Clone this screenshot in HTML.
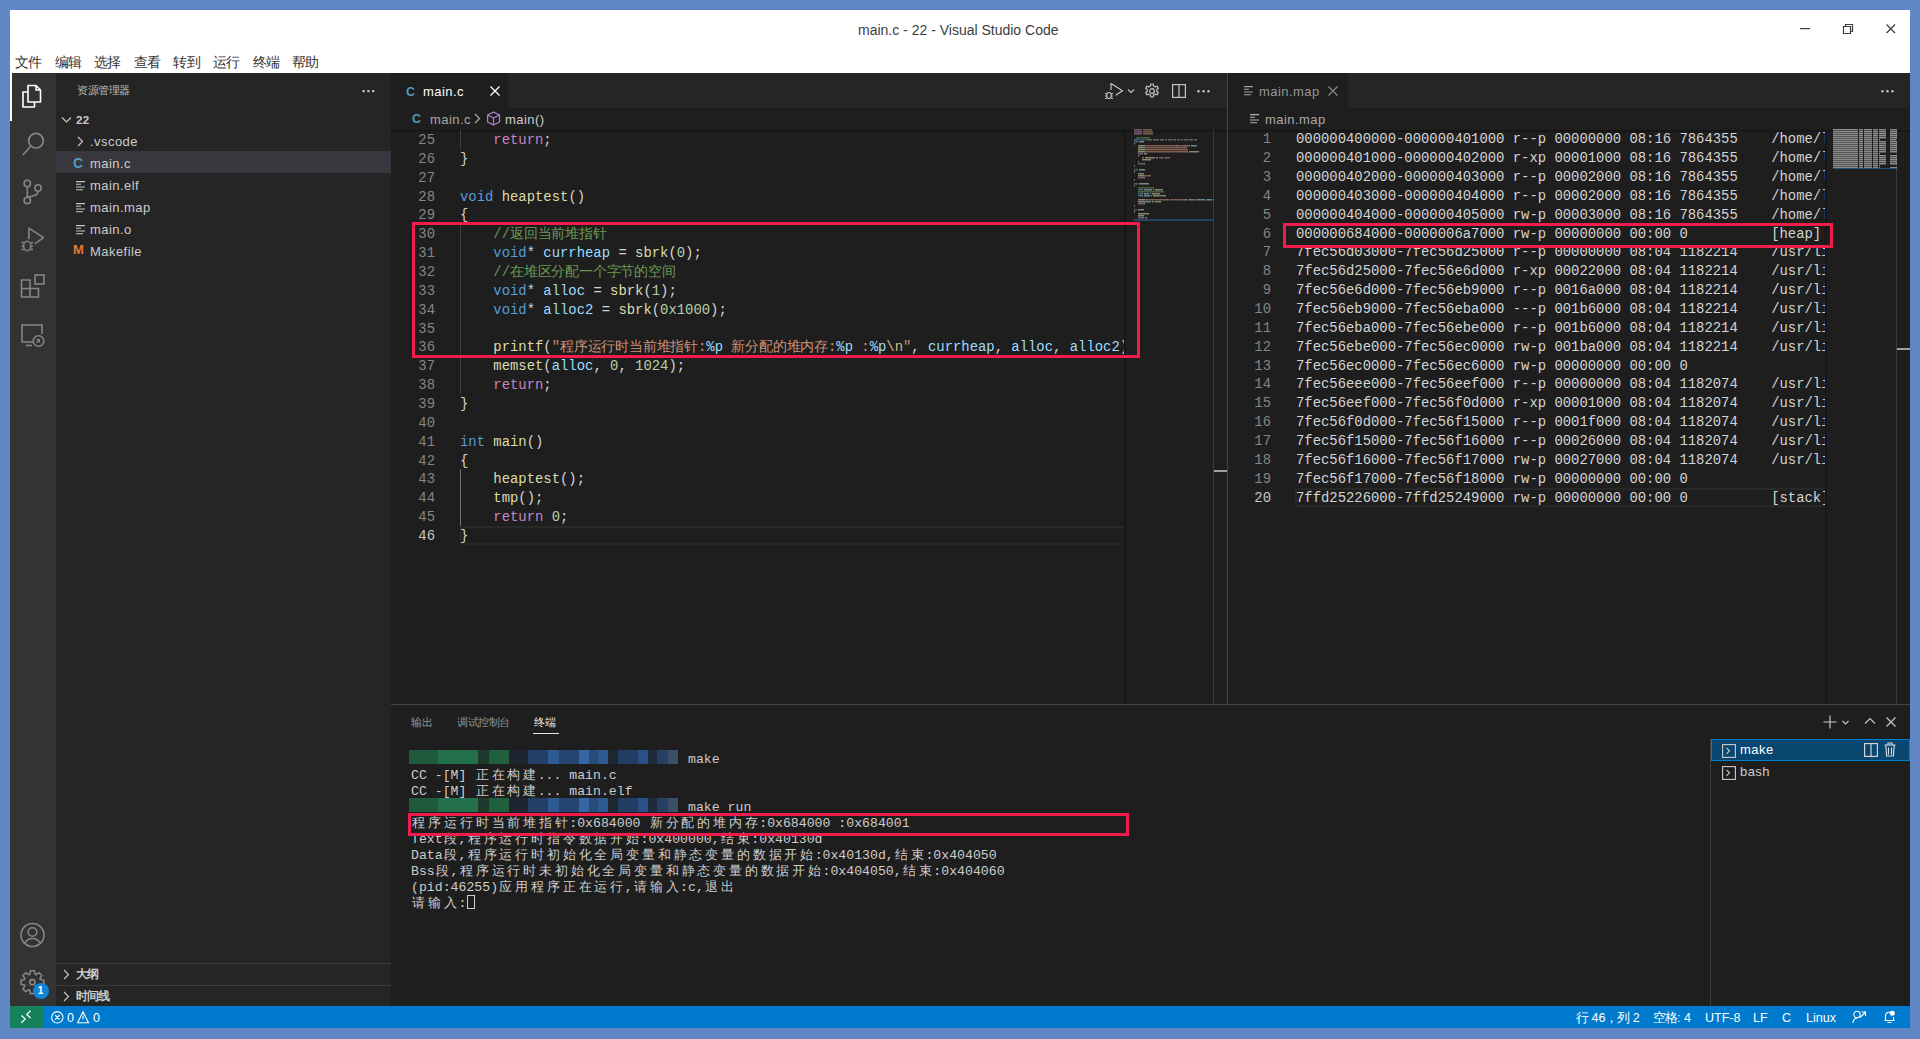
<!DOCTYPE html><html><head><meta charset="utf-8"><style>
*{margin:0;padding:0;box-sizing:border-box}
html,body{width:1920px;height:1039px;overflow:hidden;background:#6087c4;font-family:"Liberation Sans",sans-serif}
.a{position:absolute}
i.cj{display:inline-block;font-style:normal;text-align:center;overflow:visible;vertical-align:top}
.code{position:absolute;font-family:"Liberation Mono",monospace;font-size:13.9px;white-space:pre;line-height:18.857px;height:18.857px;color:#d4d4d4}
.ln{position:absolute;font-family:"Liberation Mono",monospace;font-size:13.9px;color:#858585;text-align:right;line-height:18.857px;height:18.857px;width:60px}
.k{color:#569cd6}.c{color:#c586c0}.f{color:#dcdcaa}.v{color:#9cdcfe}.s{color:#ce9178}.cm{color:#6a9955}.n{color:#b5cea8}.e{color:#d7ba7d}.p{color:#d4d4d4}
.term{position:absolute;font-family:"Liberation Mono",monospace;font-size:13.2px;white-space:pre;color:#cccccc;line-height:16px;height:16px;padding-top:2px}
.red{position:absolute;border:3px solid #f01c4c}
.side{position:absolute;font-size:13px;letter-spacing:0.45px;color:#cccccc;line-height:22px;height:22px;white-space:pre;padding-top:2px}
svg{position:absolute;overflow:visible}
.clip{position:absolute;overflow:hidden}
</style></head><body>
<div class="a" style="left:10px;top:10px;width:1900px;height:63px;background:#ffffff"></div>
<div class="a" style="left:858px;top:20px;height:20px;font-size:14px;color:#3c3c3c;white-space:pre;line-height:20px">main.c - 22 - Visual Studio Code</div>
<svg style="left:1800px;top:28px" width="11" height="2"><rect x="0" y="0" width="10" height="1.2" fill="#3c3c3c"/></svg>
<svg style="left:1842px;top:23px" width="12" height="12"><path d="M1.5 3.5h7v7h-7z M3.5 3.5v-2h7v7h-2" fill="none" stroke="#3c3c3c" stroke-width="1.2"/></svg>
<svg style="left:1886px;top:24px" width="10" height="10"><path d="M0.5 0.5L9 9M9 0.5L0.5 9" stroke="#3c3c3c" stroke-width="1.2"/></svg>
<div class="a" style="left:15.0px;top:54.5px;font-size:13.5px;color:#333;line-height:16px;white-space:pre"><i class="cj" style="width:13.2px">文</i><i class="cj" style="width:13.2px">件</i></div>
<div class="a" style="left:54.6px;top:54.5px;font-size:13.5px;color:#333;line-height:16px;white-space:pre"><i class="cj" style="width:13.2px">编</i><i class="cj" style="width:13.2px">辑</i></div>
<div class="a" style="left:94.2px;top:54.5px;font-size:13.5px;color:#333;line-height:16px;white-space:pre"><i class="cj" style="width:13.2px">选</i><i class="cj" style="width:13.2px">择</i></div>
<div class="a" style="left:133.8px;top:54.5px;font-size:13.5px;color:#333;line-height:16px;white-space:pre"><i class="cj" style="width:13.2px">查</i><i class="cj" style="width:13.2px">看</i></div>
<div class="a" style="left:173.4px;top:54.5px;font-size:13.5px;color:#333;line-height:16px;white-space:pre"><i class="cj" style="width:13.2px">转</i><i class="cj" style="width:13.2px">到</i></div>
<div class="a" style="left:213.0px;top:54.5px;font-size:13.5px;color:#333;line-height:16px;white-space:pre"><i class="cj" style="width:13.2px">运</i><i class="cj" style="width:13.2px">行</i></div>
<div class="a" style="left:252.6px;top:54.5px;font-size:13.5px;color:#333;line-height:16px;white-space:pre"><i class="cj" style="width:13.2px">终</i><i class="cj" style="width:13.2px">端</i></div>
<div class="a" style="left:292.2px;top:54.5px;font-size:13.5px;color:#333;line-height:16px;white-space:pre"><i class="cj" style="width:13.2px">帮</i><i class="cj" style="width:13.2px">助</i></div>
<div class="a" style="left:10px;top:73px;width:46px;height:933px;background:#333333"></div>
<div class="a" style="left:10px;top:73px;width:2px;height:48px;background:#ffffff"></div>
<svg style="left:20px;top:83px" width="26" height="26"><g fill="none" stroke="#ffffff" stroke-width="1.6" stroke-linejoin="round"><path d="M8 2.5h8l4.5 4.5v12h-12.5z"/><path d="M16 2.5v4.5h4.5"/><path d="M8 9H3v15h11.5v-5"/></g></svg>
<svg style="left:19px;top:129px" width="26" height="30"><g fill="none" stroke="#858585" stroke-width="1.7"><circle cx="17" cy="11.7" r="7.3"/><path d="M12 17L3.8 26"/></g></svg>
<svg style="left:19px;top:176px" width="26" height="30"><g fill="none" stroke="#858585" stroke-width="1.6"><circle cx="8.3" cy="7.5" r="3.2"/><circle cx="8.3" cy="24.4" r="3.2"/><circle cx="19" cy="12" r="3.2"/><path d="M8.3 10.7v10.5M19 15.2c0 4-4 5-10.7 6"/></g></svg>
<svg style="left:14px;top:222px" width="36" height="36"><g fill="none" stroke="#858585" stroke-width="1.6" stroke-linejoin="round"><path d="M14.9 17.3V6.2l14.6 9.4-8.7 6.2"/><ellipse cx="13.2" cy="24" rx="3.6" ry="4.8"/><path d="M7.4 20.5h2.3M7.4 24h2.3M7.4 27.5h2.3M16.7 20.5h2.3M16.7 24h2.3M16.7 27.5h2.3"/></g></svg>
<svg style="left:20px;top:273px" width="28" height="28"><g fill="none" stroke="#858585" stroke-width="1.6"><path d="M1.5 7h8.5v8.5h8.5v8.5H1.5z M1.5 15.5h8.5v8.5"/><rect x="15" y="2" width="9" height="9"/></g></svg>
<svg style="left:20px;top:323px" width="28" height="28"><g fill="none" stroke="#858585" stroke-width="1.6"><path d="M14 19H2V2h20v9"/><path d="M6 22.5h6"/><circle cx="18.5" cy="18" r="5.3"/><path d="M16.5 19.5l3-3M19.5 19.5v-3h-3" stroke-width="1.2"/></g></svg>
<svg style="left:19px;top:921px" width="28" height="28"><g fill="none" stroke="#858585" stroke-width="1.6"><circle cx="13.5" cy="14" r="11.5"/><circle cx="13.5" cy="11" r="4.3"/><path d="M5.5 22.5c2-3.5 4.5-5 8-5s6 1.5 8 5"/></g></svg>
<svg style="left:10px;top:960px" width="46" height="46"><path d="M33.83 20.24 L33.83 24.16 L30.35 24.92 L29.94 25.89 L31.87 28.90 L29.10 31.67 L26.09 29.74 L25.12 30.15 L24.36 33.63 L20.44 33.63 L19.68 30.15 L18.71 29.74 L15.70 31.67 L12.93 28.90 L14.86 25.89 L14.45 24.92 L10.97 24.16 L10.97 20.24 L14.45 19.48 L14.86 18.51 L12.93 15.50 L15.70 12.73 L18.71 14.66 L19.68 14.25 L20.44 10.77 L24.36 10.77 L25.12 14.25 L26.09 14.66 L29.10 12.73 L31.87 15.50 L29.94 18.51 L30.35 19.48Z" fill="none" stroke="#858585" stroke-width="1.6" stroke-linejoin="round"/><circle cx="22.4" cy="22.2" r="2.6" fill="none" stroke="#858585" stroke-width="1.6"/></svg>
<div class="a" style="left:32.5px;top:982.5px;width:16px;height:16px;border-radius:50%;background:#1184d6;color:#fff;font-size:10px;font-weight:bold;text-align:center;line-height:16px">1</div>
<div class="a" style="left:56px;top:73px;width:335px;height:933px;background:#252526"></div>
<div class="a" style="left:77px;top:83px;font-size:11px;color:#bbbbbb;line-height:14px;white-space:pre"><i class="cj" style="width:10.6px">资</i><i class="cj" style="width:10.6px">源</i><i class="cj" style="width:10.6px">管</i><i class="cj" style="width:10.6px">理</i><i class="cj" style="width:10.6px">器</i></div>
<svg style="left:362px;top:90px" width="14" height="3"><rect x="0.5" y="0" width="2.2" height="2.2" fill="#c5c5c5"/><rect x="5.3" y="0" width="2.2" height="2.2" fill="#c5c5c5"/><rect x="10.1" y="0" width="2.2" height="2.2" fill="#c5c5c5"/></svg>
<svg style="left:61px;top:116px" width="12" height="8"><path d="M1 1.5l4.5 4.5 4.5-4.5" fill="none" stroke="#c5c5c5" stroke-width="1.2"/></svg>
<div class="side" style="left:76px;top:107px;font-weight:bold;font-size:11.5px">22</div>
<svg style="left:77px;top:136px" width="8" height="12"><path d="M1 1l4.5 4.5L1 10" fill="none" stroke="#c5c5c5" stroke-width="1.2"/></svg>
<div class="side" style="left:90px;top:129px">.vscode</div>
<div class="a" style="left:56px;top:151px;width:335px;height:22px;background:#37373d"></div>
<div class="a" style="left:73px;top:156px;font-size:14px;font-weight:bold;color:#519aba;line-height:14px">C</div>
<div class="side" style="left:90px;top:151px">main.c</div>
<svg style="left:75.5px;top:180.5px" width="10" height="10"><g stroke="#c5c5c5" stroke-width="1.1"><path d="M0 0.6h9M0 3.3h5M0 6h9M0 8.7h7"/></g></svg>
<div class="side" style="left:90px;top:173px">main.elf</div>
<svg style="left:75.5px;top:202.5px" width="10" height="10"><g stroke="#c5c5c5" stroke-width="1.1"><path d="M0 0.6h9M0 3.3h5M0 6h9M0 8.7h7"/></g></svg>
<div class="side" style="left:90px;top:195px">main.map</div>
<svg style="left:75.5px;top:224.5px" width="10" height="10"><g stroke="#c5c5c5" stroke-width="1.1"><path d="M0 0.6h9M0 3.3h5M0 6h9M0 8.7h7"/></g></svg>
<div class="side" style="left:90px;top:217px">main.o</div>
<div class="a" style="left:73px;top:243px;font-size:13px;font-weight:bold;color:#e37933;line-height:13px">M</div>
<div class="side" style="left:90px;top:239px">Makefile</div>
<div class="a" style="left:56px;top:963px;width:335px;height:1px;background:#3c3c3c"></div>
<div class="a" style="left:56px;top:985px;width:335px;height:1px;background:#3c3c3c"></div>
<svg style="left:63px;top:969px" width="8" height="12"><path d="M1 1l4.5 4.5L1 10" fill="none" stroke="#c5c5c5" stroke-width="1.2"/></svg>
<div class="a" style="left:76px;top:964px;font-size:11.5px;font-weight:bold;color:#cccccc;line-height:21px;white-space:pre"><i class="cj" style="width:11.2px">大</i><i class="cj" style="width:11.2px">纲</i></div>
<svg style="left:63px;top:991px" width="8" height="12"><path d="M1 1l4.5 4.5L1 10" fill="none" stroke="#c5c5c5" stroke-width="1.2"/></svg>
<div class="a" style="left:76px;top:986px;font-size:11.5px;font-weight:bold;color:#cccccc;line-height:21px;white-space:pre"><i class="cj" style="width:11.2px">时</i><i class="cj" style="width:11.2px">间</i><i class="cj" style="width:11.2px">线</i></div>
<div class="a" style="left:391px;top:73px;width:836px;height:631px;background:#1e1e1e"></div>
<div class="a" style="left:391px;top:73px;width:836px;height:35px;background:#252526"></div>
<div class="a" style="left:391px;top:73px;width:117px;height:35px;background:#1e1e1e"></div>
<div class="a" style="left:406px;top:85px;font-size:12.5px;font-weight:bold;color:#519aba;line-height:14px">C</div>
<div class="a" style="left:423px;top:83px;font-size:13px;letter-spacing:0.45px;color:#ffffff;line-height:18px;white-space:pre">main.c</div>
<svg style="left:490px;top:86px" width="10" height="10"><path d="M0.5 0.5L9.5 9.5M9.5 0.5L0.5 9.5" stroke="#ffffff" stroke-width="1.3"/></svg>
<svg style="left:1104px;top:81px" width="32" height="20"><g fill="none" stroke="#c5c5c5" stroke-width="1.2" stroke-linejoin="round"><path d="M7 9V2.5l11.5 7.2-6.8 4.6"/><ellipse cx="5" cy="14.5" rx="2.3" ry="3"/><path d="M1 12.5h1.7M1 15h1.7M1 17.5h1.7M7.3 12.5H9M7.3 15H9M7.3 17.5H9"/></g><path d="M24 8.5l3 3 3-3" fill="none" stroke="#c5c5c5" stroke-width="1.1"/></svg>
<svg style="left:1144px;top:83px" width="16" height="16"><g fill="none" stroke="#c5c5c5" stroke-width="1.2"><circle cx="8" cy="8" r="2.3"/><path d="M6.8 1h2.4l.4 2 1.6.9 1.9-.7 1.2 2.1-1.5 1.3v1.8l1.5 1.3-1.2 2.1-1.9-.7-1.6.9-.4 2H6.8l-.4-2-1.6-.9-1.9.7-1.2-2.1 1.5-1.3V6.6L1.7 5.3l1.2-2.1 1.9.7 1.6-.9z"/></g></svg>
<svg style="left:1172px;top:84px" width="14" height="14"><g fill="none" stroke="#c5c5c5" stroke-width="1.2"><rect x="0.6" y="0.6" width="12.8" height="12.8"/><path d="M7 0.6v12.8"/></g></svg>
<svg style="left:1197px;top:90px" width="14" height="3"><circle cx="1.5" cy="1.3" r="1.2" fill="#c5c5c5"/><circle cx="6.5" cy="1.3" r="1.2" fill="#c5c5c5"/><circle cx="11.5" cy="1.3" r="1.2" fill="#c5c5c5"/></svg>
<div class="a" style="left:412px;top:112px;font-size:12.5px;font-weight:bold;color:#519aba;line-height:14px">C</div>
<div class="a" style="left:430px;top:111px;font-size:13px;letter-spacing:0.45px;color:#a9a9a9;line-height:18px;white-space:pre">main.c</div>
<svg style="left:474px;top:113px" width="8" height="12"><path d="M1 1l4.5 4.5L1 10" fill="none" stroke="#a9a9a9" stroke-width="1.2"/></svg>
<svg style="left:487px;top:111px" width="14" height="15"><g fill="none" stroke="#b180d7" stroke-width="1.2" stroke-linejoin="round"><path d="M6.5 1L12.5 4v7L6.5 14 0.6 11V4z"/><path d="M0.6 4l5.9 3 6-3M6.5 7v7"/></g></svg>
<div class="a" style="left:505px;top:111px;font-size:13px;letter-spacing:0.45px;color:#cccccc;line-height:18px;white-space:pre">main()</div>
<div class="a" style="left:391px;top:130px;width:836px;height:3px;background:linear-gradient(#000000 0%,rgba(0,0,0,0) 100%);opacity:.35"></div>
<div class="a" style="left:460px;top:526.00px;width:666px;height:18.86px;border:2px solid #282828"></div>
<div class="a" style="left:460px;top:130.00px;width:1px;height:18.86px;background:#404040"></div>
<div class="a" style="left:460px;top:224.28px;width:1px;height:169.71px;background:#404040"></div>
<div class="a" style="left:460px;top:469.43px;width:1px;height:56.57px;background:#707070"></div>
<div class="ln" style="left:375px;top:131.00px;color:#858585">25</div>
<div class="ln" style="left:375px;top:149.86px;color:#858585">26</div>
<div class="ln" style="left:375px;top:168.71px;color:#858585">27</div>
<div class="ln" style="left:375px;top:187.57px;color:#858585">28</div>
<div class="ln" style="left:375px;top:206.43px;color:#858585">29</div>
<div class="ln" style="left:375px;top:225.28px;color:#858585">30</div>
<div class="ln" style="left:375px;top:244.14px;color:#858585">31</div>
<div class="ln" style="left:375px;top:263.00px;color:#858585">32</div>
<div class="ln" style="left:375px;top:281.86px;color:#858585">33</div>
<div class="ln" style="left:375px;top:300.71px;color:#858585">34</div>
<div class="ln" style="left:375px;top:319.57px;color:#858585">35</div>
<div class="ln" style="left:375px;top:338.43px;color:#858585">36</div>
<div class="ln" style="left:375px;top:357.28px;color:#858585">37</div>
<div class="ln" style="left:375px;top:376.14px;color:#858585">38</div>
<div class="ln" style="left:375px;top:395.00px;color:#858585">39</div>
<div class="ln" style="left:375px;top:413.86px;color:#858585">40</div>
<div class="ln" style="left:375px;top:432.71px;color:#858585">41</div>
<div class="ln" style="left:375px;top:451.57px;color:#858585">42</div>
<div class="ln" style="left:375px;top:470.43px;color:#858585">43</div>
<div class="ln" style="left:375px;top:489.28px;color:#858585">44</div>
<div class="ln" style="left:375px;top:508.14px;color:#858585">45</div>
<div class="ln" style="left:375px;top:527.00px;color:#c6c6c6">46</div>
<div class="clip" style="left:391px;top:130px;width:735px;height:574px">
<div class="code" style="left:69px;top:1.00px">    <span class="c">return</span><span class="p">;</span></div>
<div class="code" style="left:69px;top:19.86px"><span class="p">}</span></div>
<div class="code" style="left:69px;top:38.71px"></div>
<div class="code" style="left:69px;top:57.57px"><span class="k">void</span> <span class="f">heaptest</span><span class="p">()</span></div>
<div class="code" style="left:69px;top:76.43px"><span class="p">{</span></div>
<div class="code" style="left:69px;top:95.28px">    <span class="cm">//<i class="cj" style="width:13.8px">返</i><i class="cj" style="width:13.8px">回</i><i class="cj" style="width:13.8px">当</i><i class="cj" style="width:13.8px">前</i><i class="cj" style="width:13.8px">堆</i><i class="cj" style="width:13.8px">指</i><i class="cj" style="width:13.8px">针</i></span></div>
<div class="code" style="left:69px;top:114.14px">    <span class="k">void</span><span class="p">* </span><span class="v">currheap</span><span class="p"> = </span><span class="f">sbrk</span><span class="p">(</span><span class="n">0</span><span class="p">);</span></div>
<div class="code" style="left:69px;top:133.00px">    <span class="cm">//<i class="cj" style="width:13.8px">在</i><i class="cj" style="width:13.8px">堆</i><i class="cj" style="width:13.8px">区</i><i class="cj" style="width:13.8px">分</i><i class="cj" style="width:13.8px">配</i><i class="cj" style="width:13.8px">一</i><i class="cj" style="width:13.8px">个</i><i class="cj" style="width:13.8px">字</i><i class="cj" style="width:13.8px">节</i><i class="cj" style="width:13.8px">的</i><i class="cj" style="width:13.8px">空</i><i class="cj" style="width:13.8px">间</i></span></div>
<div class="code" style="left:69px;top:151.86px">    <span class="k">void</span><span class="p">* </span><span class="v">alloc</span><span class="p"> = </span><span class="f">sbrk</span><span class="p">(</span><span class="n">1</span><span class="p">);</span></div>
<div class="code" style="left:69px;top:170.71px">    <span class="k">void</span><span class="p">* </span><span class="v">alloc2</span><span class="p"> = </span><span class="f">sbrk</span><span class="p">(</span><span class="n">0x1000</span><span class="p">);</span></div>
<div class="code" style="left:69px;top:189.57px"></div>
<div class="code" style="left:69px;top:208.43px">    <span class="f">printf</span><span class="p">(</span><span class="s">&quot;<i class="cj" style="width:13.8px">程</i><i class="cj" style="width:13.8px">序</i><i class="cj" style="width:13.8px">运</i><i class="cj" style="width:13.8px">行</i><i class="cj" style="width:13.8px">时</i><i class="cj" style="width:13.8px">当</i><i class="cj" style="width:13.8px">前</i><i class="cj" style="width:13.8px">堆</i><i class="cj" style="width:13.8px">指</i><i class="cj" style="width:13.8px">针</i>:</span><span class="v">%p</span><span class="s"> <i class="cj" style="width:13.8px">新</i><i class="cj" style="width:13.8px">分</i><i class="cj" style="width:13.8px">配</i><i class="cj" style="width:13.8px">的</i><i class="cj" style="width:13.8px">堆</i><i class="cj" style="width:13.8px">内</i><i class="cj" style="width:13.8px">存</i>:</span><span class="v">%p</span><span class="s"> :</span><span class="v">%p</span><span class="e">\n</span><span class="s">&quot;</span><span class="p">, </span><span class="v">currheap</span><span class="p">, </span><span class="v">alloc</span><span class="p">, </span><span class="v">alloc2</span><span class="p">);</span></div>
<div class="code" style="left:69px;top:227.28px">    <span class="f">memset</span><span class="p">(</span><span class="v">alloc</span><span class="p">, </span><span class="n">0</span><span class="p">, </span><span class="n">1024</span><span class="p">);</span></div>
<div class="code" style="left:69px;top:246.14px">    <span class="c">return</span><span class="p">;</span></div>
<div class="code" style="left:69px;top:265.00px"><span class="p">}</span></div>
<div class="code" style="left:69px;top:283.86px"></div>
<div class="code" style="left:69px;top:302.71px"><span class="k">int</span> <span class="f">main</span><span class="p">()</span></div>
<div class="code" style="left:69px;top:321.57px"><span class="p">{</span></div>
<div class="code" style="left:69px;top:340.43px">    <span class="f">heaptest</span><span class="p">();</span></div>
<div class="code" style="left:69px;top:359.28px">    <span class="f">tmp</span><span class="p">();</span></div>
<div class="code" style="left:69px;top:378.14px">    <span class="c">return</span> <span class="n">0</span><span class="p">;</span></div>
<div class="code" style="left:69px;top:397.00px"><span class="p">}</span></div>
</div>
<div class="a" style="left:1124px;top:130px;width:2px;height:574px;background:#161616"></div>
<div class="a" style="left:1213px;top:130px;width:1px;height:574px;background:#3a3a3a"></div>
<div class="a" style="left:1214px;top:470px;width:13px;height:2px;background:#a0a0a0"></div>
<svg style="left:1134px;top:129px" width="80" height="92"><g opacity="0.55"><path fill="#c586c0" d="M0 0h1v1.6h-1zM1 0h1v1.6h-1zM2 0h1v1.6h-1zM3 0h1v1.6h-1zM4 0h1v1.6h-1zM5 0h1v1.6h-1zM6 0h1v1.6h-1zM7 0h1v1.6h-1zM0 2h1v1.6h-1zM1 2h1v1.6h-1zM2 2h1v1.6h-1zM3 2h1v1.6h-1zM4 2h1v1.6h-1zM5 2h1v1.6h-1zM6 2h1v1.6h-1zM7 2h1v1.6h-1zM0 4h1v1.6h-1zM1 4h1v1.6h-1zM2 4h1v1.6h-1zM3 4h1v1.6h-1zM4 4h1v1.6h-1zM5 4h1v1.6h-1zM6 4h1v1.6h-1zM7 4h1v1.6h-1zM4 24h1v1.6h-1zM5 24h1v1.6h-1zM6 24h1v1.6h-1zM7 24h1v1.6h-1zM8 24h1v1.6h-1zM8 28h1v1.6h-1zM9 28h1v1.6h-1zM30 28h1v1.6h-1zM31 28h1v1.6h-1zM32 28h1v1.6h-1zM33 28h1v1.6h-1zM34 28h1v1.6h-1zM35 28h1v1.6h-1zM4 34h1v1.6h-1zM5 34h1v1.6h-1zM6 34h1v1.6h-1zM7 34h1v1.6h-1zM8 34h1v1.6h-1zM9 34h1v1.6h-1zM4 48h1v1.6h-1zM5 48h1v1.6h-1zM6 48h1v1.6h-1zM7 48h1v1.6h-1zM8 48h1v1.6h-1zM9 48h1v1.6h-1zM4 74h1v1.6h-1zM5 74h1v1.6h-1zM6 74h1v1.6h-1zM7 74h1v1.6h-1zM8 74h1v1.6h-1zM9 74h1v1.6h-1zM4 88h1v1.6h-1zM5 88h1v1.6h-1zM6 88h1v1.6h-1zM7 88h1v1.6h-1zM8 88h1v1.6h-1zM9 88h1v1.6h-1z"/><path fill="#ce9178" d="M9 0h1v1.6h-1zM10 0h1v1.6h-1zM11 0h1v1.6h-1zM12 0h1v1.6h-1zM13 0h1v1.6h-1zM14 0h1v1.6h-1zM15 0h1v1.6h-1zM16 0h1v1.6h-1zM17 0h1v1.6h-1zM9 2h1v1.6h-1zM10 2h1v1.6h-1zM11 2h1v1.6h-1zM12 2h1v1.6h-1zM13 2h1v1.6h-1zM14 2h1v1.6h-1zM15 2h1v1.6h-1zM16 2h1v1.6h-1zM17 2h1v1.6h-1zM18 2h1v1.6h-1zM9 4h1v1.6h-1zM10 4h1v1.6h-1zM11 4h1v1.6h-1zM12 4h1v1.6h-1zM13 4h1v1.6h-1zM14 4h1v1.6h-1zM15 4h1v1.6h-1zM16 4h1v1.6h-1zM17 4h1v1.6h-1zM18 4h1v1.6h-1zM11 16h1v1.6h-1zM12 16h1v1.6h-1zM13 16h1v1.6h-1zM14 16h1v1.6h-1zM15 16h1v1.6h-1zM16 16h2v1.6h-2zM18 16h1v1.6h-1zM19 16h2v1.6h-2zM21 16h2v1.6h-2zM23 16h2v1.6h-2zM25 16h2v1.6h-2zM27 16h2v1.6h-2zM29 16h2v1.6h-2zM31 16h2v1.6h-2zM33 16h2v1.6h-2zM35 16h2v1.6h-2zM37 16h2v1.6h-2zM39 16h2v1.6h-2zM41 16h1v1.6h-1zM44 16h1v1.6h-1zM45 16h2v1.6h-2zM47 16h2v1.6h-2zM49 16h1v1.6h-1zM52 16h1v1.6h-1zM53 16h1v1.6h-1zM54 16h1v1.6h-1zM11 18h1v1.6h-1zM12 18h1v1.6h-1zM13 18h1v1.6h-1zM14 18h1v1.6h-1zM15 18h1v1.6h-1zM16 18h2v1.6h-2zM18 18h1v1.6h-1zM19 18h2v1.6h-2zM21 18h2v1.6h-2zM23 18h2v1.6h-2zM25 18h2v1.6h-2zM27 18h2v1.6h-2zM29 18h2v1.6h-2zM31 18h2v1.6h-2zM33 18h2v1.6h-2zM35 18h2v1.6h-2zM37 18h2v1.6h-2zM39 18h2v1.6h-2zM41 18h2v1.6h-2zM43 18h2v1.6h-2zM45 18h2v1.6h-2zM47 18h2v1.6h-2zM49 18h2v1.6h-2zM51 18h2v1.6h-2zM11 20h1v1.6h-1zM12 20h1v1.6h-1zM13 20h1v1.6h-1zM14 20h1v1.6h-1zM15 20h2v1.6h-2zM17 20h1v1.6h-1zM18 20h2v1.6h-2zM20 20h2v1.6h-2zM22 20h2v1.6h-2zM24 20h2v1.6h-2zM26 20h2v1.6h-2zM28 20h2v1.6h-2zM30 20h2v1.6h-2zM32 20h2v1.6h-2zM34 20h2v1.6h-2zM36 20h2v1.6h-2zM38 20h2v1.6h-2zM40 20h2v1.6h-2zM42 20h2v1.6h-2zM44 20h2v1.6h-2zM46 20h2v1.6h-2zM48 20h2v1.6h-2zM50 20h2v1.6h-2zM52 20h2v1.6h-2zM11 22h1v1.6h-1zM12 22h1v1.6h-1zM13 22h1v1.6h-1zM14 22h1v1.6h-1zM15 22h1v1.6h-1zM16 22h1v1.6h-1zM17 22h1v1.6h-1zM18 22h1v1.6h-1zM19 22h1v1.6h-1zM20 22h2v1.6h-2zM22 22h2v1.6h-2zM24 22h2v1.6h-2zM26 22h2v1.6h-2zM28 22h2v1.6h-2zM30 22h2v1.6h-2zM32 22h2v1.6h-2zM34 22h2v1.6h-2zM36 22h1v1.6h-1zM37 22h2v1.6h-2zM39 22h2v1.6h-2zM41 22h2v1.6h-2zM43 22h1v1.6h-1zM44 22h1v1.6h-1zM45 22h1v1.6h-1zM46 22h2v1.6h-2zM48 22h2v1.6h-2zM50 22h1v1.6h-1zM51 22h1v1.6h-1zM52 22h1v1.6h-1zM25 28h1v1.6h-1zM26 28h1v1.6h-1zM27 28h1v1.6h-1zM10 46h1v1.6h-1zM11 46h1v1.6h-1zM12 46h1v1.6h-1zM13 46h1v1.6h-1zM14 46h1v1.6h-1zM15 46h1v1.6h-1zM16 46h1v1.6h-1zM11 70h1v1.6h-1zM12 70h2v1.6h-2zM14 70h2v1.6h-2zM16 70h2v1.6h-2zM18 70h2v1.6h-2zM20 70h2v1.6h-2zM22 70h2v1.6h-2zM24 70h2v1.6h-2zM26 70h2v1.6h-2zM28 70h2v1.6h-2zM30 70h2v1.6h-2zM32 70h1v1.6h-1zM36 70h2v1.6h-2zM38 70h2v1.6h-2zM40 70h2v1.6h-2zM42 70h2v1.6h-2zM44 70h2v1.6h-2zM46 70h2v1.6h-2zM48 70h2v1.6h-2zM50 70h1v1.6h-1zM54 70h1v1.6h-1zM59 70h1v1.6h-1z"/><path fill="#6a9955" d="M2 8h1v1.6h-1zM3 8h1v1.6h-1zM4 8h2v1.6h-2zM6 8h2v1.6h-2zM8 8h2v1.6h-2zM10 8h2v1.6h-2zM12 8h2v1.6h-2zM14 8h2v1.6h-2zM4 58h1v1.6h-1zM5 58h1v1.6h-1zM6 58h2v1.6h-2zM8 58h2v1.6h-2zM10 58h2v1.6h-2zM12 58h2v1.6h-2zM14 58h2v1.6h-2zM16 58h2v1.6h-2zM18 58h2v1.6h-2zM4 62h1v1.6h-1zM5 62h1v1.6h-1zM6 62h2v1.6h-2zM8 62h2v1.6h-2zM10 62h2v1.6h-2zM12 62h2v1.6h-2zM14 62h2v1.6h-2zM16 62h2v1.6h-2zM18 62h2v1.6h-2zM20 62h2v1.6h-2zM22 62h2v1.6h-2zM24 62h2v1.6h-2zM26 62h2v1.6h-2zM28 62h2v1.6h-2z"/><path fill="#569cd6" d="M0 10h1v1.6h-1zM1 10h1v1.6h-1zM2 10h1v1.6h-1zM3 10h1v1.6h-1zM4 10h1v1.6h-1zM5 10h1v1.6h-1zM7 10h1v1.6h-1zM8 10h1v1.6h-1zM9 10h1v1.6h-1zM10 10h1v1.6h-1zM0 12h1v1.6h-1zM1 12h1v1.6h-1zM2 12h1v1.6h-1zM3 12h1v1.6h-1zM0 40h1v1.6h-1zM1 40h1v1.6h-1zM2 40h1v1.6h-1zM3 40h1v1.6h-1zM0 54h1v1.6h-1zM1 54h1v1.6h-1zM2 54h1v1.6h-1zM3 54h1v1.6h-1zM4 60h1v1.6h-1zM5 60h1v1.6h-1zM6 60h1v1.6h-1zM7 60h1v1.6h-1zM4 64h1v1.6h-1zM5 64h1v1.6h-1zM6 64h1v1.6h-1zM7 64h1v1.6h-1zM4 66h1v1.6h-1zM5 66h1v1.6h-1zM6 66h1v1.6h-1zM7 66h1v1.6h-1zM0 80h1v1.6h-1zM1 80h1v1.6h-1zM2 80h1v1.6h-1z"/><path fill="#a0a0a0" d="M12 10h1v1.6h-1zM13 10h1v1.6h-1zM14 10h1v1.6h-1zM15 10h1v1.6h-1zM16 10h1v1.6h-1zM17 10h1v1.6h-1zM19 10h1v1.6h-1zM20 10h1v1.6h-1zM21 10h1v1.6h-1zM22 10h1v1.6h-1zM23 10h1v1.6h-1zM24 10h1v1.6h-1zM26 10h1v1.6h-1zM27 10h1v1.6h-1zM28 10h1v1.6h-1zM29 10h1v1.6h-1zM31 10h1v1.6h-1zM32 10h1v1.6h-1zM34 10h1v1.6h-1zM35 10h1v1.6h-1zM36 10h1v1.6h-1zM37 10h1v1.6h-1zM39 10h1v1.6h-1zM40 10h1v1.6h-1zM41 10h1v1.6h-1zM43 10h1v1.6h-1zM44 10h1v1.6h-1zM45 10h1v1.6h-1zM47 10h1v1.6h-1zM48 10h1v1.6h-1zM50 10h1v1.6h-1zM51 10h1v1.6h-1zM52 10h1v1.6h-1zM53 10h1v1.6h-1zM55 10h1v1.6h-1zM56 10h1v1.6h-1zM57 10h1v1.6h-1zM58 10h1v1.6h-1zM60 10h1v1.6h-1zM61 10h1v1.6h-1zM62 10h1v1.6h-1z"/><path fill="#dcdcaa" d="M5 12h1v1.6h-1zM6 12h1v1.6h-1zM7 12h1v1.6h-1zM4 16h1v1.6h-1zM5 16h1v1.6h-1zM6 16h1v1.6h-1zM7 16h1v1.6h-1zM8 16h1v1.6h-1zM9 16h1v1.6h-1zM4 18h1v1.6h-1zM5 18h1v1.6h-1zM6 18h1v1.6h-1zM7 18h1v1.6h-1zM8 18h1v1.6h-1zM9 18h1v1.6h-1zM4 20h1v1.6h-1zM5 20h1v1.6h-1zM6 20h1v1.6h-1zM7 20h1v1.6h-1zM8 20h1v1.6h-1zM9 20h1v1.6h-1zM4 22h1v1.6h-1zM5 22h1v1.6h-1zM6 22h1v1.6h-1zM7 22h1v1.6h-1zM8 22h1v1.6h-1zM9 22h1v1.6h-1zM55 22h1v1.6h-1zM56 22h1v1.6h-1zM57 22h1v1.6h-1zM58 22h1v1.6h-1zM59 22h1v1.6h-1zM60 22h1v1.6h-1zM12 28h1v1.6h-1zM13 28h1v1.6h-1zM14 28h1v1.6h-1zM15 28h1v1.6h-1zM16 28h1v1.6h-1zM17 28h1v1.6h-1zM18 28h1v1.6h-1zM8 30h1v1.6h-1zM9 30h1v1.6h-1zM10 30h1v1.6h-1zM11 30h1v1.6h-1zM12 30h1v1.6h-1zM5 40h1v1.6h-1zM6 40h1v1.6h-1zM7 40h1v1.6h-1zM8 40h1v1.6h-1zM4 44h1v1.6h-1zM5 44h1v1.6h-1zM6 44h1v1.6h-1zM4 46h1v1.6h-1zM5 46h1v1.6h-1zM6 46h1v1.6h-1zM7 46h1v1.6h-1zM8 46h1v1.6h-1zM9 46h1v1.6h-1zM5 54h1v1.6h-1zM6 54h1v1.6h-1zM7 54h1v1.6h-1zM8 54h1v1.6h-1zM9 54h1v1.6h-1zM10 54h1v1.6h-1zM11 54h1v1.6h-1zM12 54h1v1.6h-1zM21 60h1v1.6h-1zM22 60h1v1.6h-1zM23 60h1v1.6h-1zM24 60h1v1.6h-1zM18 64h1v1.6h-1zM19 64h1v1.6h-1zM20 64h1v1.6h-1zM21 64h1v1.6h-1zM19 66h1v1.6h-1zM20 66h1v1.6h-1zM21 66h1v1.6h-1zM22 66h1v1.6h-1zM4 70h1v1.6h-1zM5 70h1v1.6h-1zM6 70h1v1.6h-1zM7 70h1v1.6h-1zM8 70h1v1.6h-1zM9 70h1v1.6h-1zM4 72h1v1.6h-1zM5 72h1v1.6h-1zM6 72h1v1.6h-1zM7 72h1v1.6h-1zM8 72h1v1.6h-1zM9 72h1v1.6h-1zM4 80h1v1.6h-1zM5 80h1v1.6h-1zM6 80h1v1.6h-1zM7 80h1v1.6h-1zM4 84h1v1.6h-1zM5 84h1v1.6h-1zM6 84h1v1.6h-1zM7 84h1v1.6h-1zM8 84h1v1.6h-1zM9 84h1v1.6h-1zM10 84h1v1.6h-1zM11 84h1v1.6h-1zM4 86h1v1.6h-1zM5 86h1v1.6h-1zM6 86h1v1.6h-1z"/><path fill="#d4d4d4" d="M8 12h1v1.6h-1zM9 12h1v1.6h-1zM0 14h1v1.6h-1zM10 16h1v1.6h-1zM55 16h1v1.6h-1zM10 18h1v1.6h-1zM10 20h1v1.6h-1zM10 22h1v1.6h-1zM53 22h1v1.6h-1zM61 22h1v1.6h-1zM62 22h1v1.6h-1zM63 22h1v1.6h-1zM64 22h1v1.6h-1zM10 24h1v1.6h-1zM12 24h1v1.6h-1zM4 26h1v1.6h-1zM11 28h1v1.6h-1zM19 28h1v1.6h-1zM20 28h1v1.6h-1zM22 28h1v1.6h-1zM23 28h1v1.6h-1zM28 28h1v1.6h-1zM13 30h1v1.6h-1zM14 30h1v1.6h-1zM15 30h1v1.6h-1zM16 30h1v1.6h-1zM4 32h1v1.6h-1zM10 34h1v1.6h-1zM0 36h1v1.6h-1zM9 40h1v1.6h-1zM10 40h1v1.6h-1zM0 42h1v1.6h-1zM7 44h1v1.6h-1zM8 44h1v1.6h-1zM9 44h1v1.6h-1zM10 48h1v1.6h-1zM0 50h1v1.6h-1zM13 54h1v1.6h-1zM14 54h1v1.6h-1zM0 56h1v1.6h-1zM8 60h1v1.6h-1zM19 60h1v1.6h-1zM25 60h1v1.6h-1zM27 60h1v1.6h-1zM28 60h1v1.6h-1zM8 64h1v1.6h-1zM16 64h1v1.6h-1zM22 64h1v1.6h-1zM24 64h1v1.6h-1zM25 64h1v1.6h-1zM8 66h1v1.6h-1zM17 66h1v1.6h-1zM23 66h1v1.6h-1zM30 66h1v1.6h-1zM31 66h1v1.6h-1zM10 70h1v1.6h-1zM60 70h1v1.6h-1zM70 70h1v1.6h-1zM77 70h1v1.6h-1zM10 72h1v1.6h-1zM16 72h1v1.6h-1zM19 72h1v1.6h-1zM25 72h1v1.6h-1zM26 72h1v1.6h-1zM10 74h1v1.6h-1zM0 76h1v1.6h-1zM8 80h1v1.6h-1zM9 80h1v1.6h-1zM0 82h1v1.6h-1zM12 84h1v1.6h-1zM13 84h1v1.6h-1zM14 84h1v1.6h-1zM7 86h1v1.6h-1zM8 86h1v1.6h-1zM9 86h1v1.6h-1zM12 88h1v1.6h-1zM0 90h1v1.6h-1z"/><path fill="#9cdcfe" d="M42 16h1v1.6h-1zM43 16h1v1.6h-1zM50 16h1v1.6h-1zM51 16h1v1.6h-1zM57 16h1v1.6h-1zM58 16h1v1.6h-1zM59 16h1v1.6h-1zM60 16h1v1.6h-1zM61 16h1v1.6h-1zM62 16h1v1.6h-1zM10 60h1v1.6h-1zM11 60h1v1.6h-1zM12 60h1v1.6h-1zM13 60h1v1.6h-1zM14 60h1v1.6h-1zM15 60h1v1.6h-1zM16 60h1v1.6h-1zM17 60h1v1.6h-1zM10 64h1v1.6h-1zM11 64h1v1.6h-1zM12 64h1v1.6h-1zM13 64h1v1.6h-1zM14 64h1v1.6h-1zM10 66h1v1.6h-1zM11 66h1v1.6h-1zM12 66h1v1.6h-1zM13 66h1v1.6h-1zM14 66h1v1.6h-1zM15 66h1v1.6h-1zM33 70h1v1.6h-1zM34 70h1v1.6h-1zM51 70h1v1.6h-1zM52 70h1v1.6h-1zM55 70h1v1.6h-1zM56 70h1v1.6h-1zM62 70h1v1.6h-1zM63 70h1v1.6h-1zM64 70h1v1.6h-1zM65 70h1v1.6h-1zM66 70h1v1.6h-1zM67 70h1v1.6h-1zM68 70h1v1.6h-1zM69 70h1v1.6h-1zM72 70h1v1.6h-1zM73 70h1v1.6h-1zM74 70h1v1.6h-1zM75 70h1v1.6h-1zM76 70h1v1.6h-1zM79 70h1v1.6h-1zM11 72h1v1.6h-1zM12 72h1v1.6h-1zM13 72h1v1.6h-1zM14 72h1v1.6h-1zM15 72h1v1.6h-1z"/><path fill="#b5cea8" d="M11 24h1v1.6h-1zM26 60h1v1.6h-1zM23 64h1v1.6h-1zM24 66h1v1.6h-1zM25 66h1v1.6h-1zM26 66h1v1.6h-1zM27 66h1v1.6h-1zM28 66h1v1.6h-1zM29 66h1v1.6h-1zM18 72h1v1.6h-1zM21 72h1v1.6h-1zM22 72h1v1.6h-1zM23 72h1v1.6h-1zM24 72h1v1.6h-1zM11 88h1v1.6h-1z"/><path fill="#d7ba7d" d="M57 70h1v1.6h-1zM58 70h1v1.6h-1z"/></g></svg>
<div class="a" style="left:1134px;top:219px;width:80px;height:2px;background:#264f78;opacity:.8"></div>
<div class="a" style="left:1227px;top:73px;width:1px;height:631px;background:#444444"></div>
<div class="a" style="left:1228px;top:73px;width:682px;height:631px;background:#1e1e1e"></div>
<div class="a" style="left:1228px;top:73px;width:682px;height:35px;background:#252526"></div>
<div class="a" style="left:1228px;top:73px;width:120px;height:35px;background:#1e1e1e"></div>
<svg style="left:1244px;top:86px" width="10" height="10"><g stroke="#a0a0a0" stroke-width="1.1"><path d="M0 0.6h9M0 3.3h5M0 6h9M0 8.7h7"/></g></svg>
<div class="a" style="left:1259px;top:83px;font-size:13px;letter-spacing:0.45px;color:#969696;line-height:18px;white-space:pre">main.map</div>
<svg style="left:1328px;top:86px" width="10" height="10"><path d="M0.5 0.5L9.5 9.5M9.5 0.5L0.5 9.5" stroke="#8a8a8a" stroke-width="1.2"/></svg>
<svg style="left:1881px;top:90px" width="14" height="3"><circle cx="1.5" cy="1.3" r="1.2" fill="#c5c5c5"/><circle cx="6.5" cy="1.3" r="1.2" fill="#c5c5c5"/><circle cx="11.5" cy="1.3" r="1.2" fill="#c5c5c5"/></svg>
<svg style="left:1250px;top:114px" width="10" height="10"><g stroke="#b0b0b0" stroke-width="1.1"><path d="M0 0.6h9M0 3.3h5M0 6h9M0 8.7h7"/></g></svg>
<div class="a" style="left:1265px;top:111px;font-size:13px;letter-spacing:0.45px;color:#a9a9a9;line-height:18px;white-space:pre">main.map</div>
<div class="a" style="left:1228px;top:130px;width:682px;height:3px;background:linear-gradient(#000000 0%,rgba(0,0,0,0) 100%);opacity:.35"></div>
<div class="a" style="left:1295px;top:488.28px;width:531px;height:18.86px;border:2px solid #282828"></div>
<div class="ln" style="left:1211px;top:130.30px;color:#858585">1</div>
<div class="ln" style="left:1211px;top:149.16px;color:#858585">2</div>
<div class="ln" style="left:1211px;top:168.01px;color:#858585">3</div>
<div class="ln" style="left:1211px;top:186.87px;color:#858585">4</div>
<div class="ln" style="left:1211px;top:205.73px;color:#858585">5</div>
<div class="ln" style="left:1211px;top:224.59px;color:#858585">6</div>
<div class="ln" style="left:1211px;top:243.44px;color:#858585">7</div>
<div class="ln" style="left:1211px;top:262.30px;color:#858585">8</div>
<div class="ln" style="left:1211px;top:281.16px;color:#858585">9</div>
<div class="ln" style="left:1211px;top:300.01px;color:#858585">10</div>
<div class="ln" style="left:1211px;top:318.87px;color:#858585">11</div>
<div class="ln" style="left:1211px;top:337.73px;color:#858585">12</div>
<div class="ln" style="left:1211px;top:356.58px;color:#858585">13</div>
<div class="ln" style="left:1211px;top:375.44px;color:#858585">14</div>
<div class="ln" style="left:1211px;top:394.30px;color:#858585">15</div>
<div class="ln" style="left:1211px;top:413.16px;color:#858585">16</div>
<div class="ln" style="left:1211px;top:432.01px;color:#858585">17</div>
<div class="ln" style="left:1211px;top:450.87px;color:#858585">18</div>
<div class="ln" style="left:1211px;top:469.73px;color:#858585">19</div>
<div class="ln" style="left:1211px;top:488.58px;color:#c6c6c6">20</div>
<div class="clip" style="left:1228px;top:130px;width:599px;height:574px">
<div class="code" style="left:68px;top:0.30px">000000400000-000000401000 r--p 00000000 08:16 7864355    /home/l</div>
<div class="code" style="left:68px;top:19.16px">000000401000-000000402000 r-xp 00001000 08:16 7864355    /home/l</div>
<div class="code" style="left:68px;top:38.01px">000000402000-000000403000 r--p 00002000 08:16 7864355    /home/l</div>
<div class="code" style="left:68px;top:56.87px">000000403000-000000404000 r--p 00002000 08:16 7864355    /home/l</div>
<div class="code" style="left:68px;top:75.73px">000000404000-000000405000 rw-p 00003000 08:16 7864355    /home/l</div>
<div class="code" style="left:68px;top:94.58px">000000684000-0000006a7000 rw-p 00000000 00:00 0          [heap]</div>
<div class="code" style="left:68px;top:113.44px">7fec56d03000-7fec56d25000 r--p 00000000 08:04 1182214    /usr/li</div>
<div class="code" style="left:68px;top:132.30px">7fec56d25000-7fec56e6d000 r-xp 00022000 08:04 1182214    /usr/li</div>
<div class="code" style="left:68px;top:151.16px">7fec56e6d000-7fec56eb9000 r--p 0016a000 08:04 1182214    /usr/li</div>
<div class="code" style="left:68px;top:170.01px">7fec56eb9000-7fec56eba000 ---p 001b6000 08:04 1182214    /usr/li</div>
<div class="code" style="left:68px;top:188.87px">7fec56eba000-7fec56ebe000 r--p 001b6000 08:04 1182214    /usr/li</div>
<div class="code" style="left:68px;top:207.73px">7fec56ebe000-7fec56ec0000 rw-p 001ba000 08:04 1182214    /usr/li</div>
<div class="code" style="left:68px;top:226.58px">7fec56ec0000-7fec56ec6000 rw-p 00000000 00:00 0</div>
<div class="code" style="left:68px;top:245.44px">7fec56eee000-7fec56eef000 r--p 00000000 08:04 1182074    /usr/li</div>
<div class="code" style="left:68px;top:264.30px">7fec56eef000-7fec56f0d000 r-xp 00001000 08:04 1182074    /usr/li</div>
<div class="code" style="left:68px;top:283.16px">7fec56f0d000-7fec56f15000 r--p 0001f000 08:04 1182074    /usr/li</div>
<div class="code" style="left:68px;top:302.01px">7fec56f15000-7fec56f16000 r--p 00026000 08:04 1182074    /usr/li</div>
<div class="code" style="left:68px;top:320.87px">7fec56f16000-7fec56f17000 rw-p 00027000 08:04 1182074    /usr/li</div>
<div class="code" style="left:68px;top:339.73px">7fec56f17000-7fec56f18000 rw-p 00000000 00:00 0</div>
<div class="code" style="left:68px;top:358.58px">7ffd25226000-7ffd25249000 rw-p 00000000 00:00 0          [stack]</div>
</div>
<div class="a" style="left:1825px;top:130px;width:2px;height:574px;background:#171717"></div>
<div class="a" style="left:1896px;top:130px;width:1px;height:574px;background:#3a3a3a"></div>
<div class="a" style="left:1897px;top:348px;width:13px;height:2px;background:#a0a0a0"></div>
<svg style="left:1833px;top:129px" width="64" height="40"><g opacity="0.6"><path fill="#d4d4d4" d="M0 0h1v1.6h-1zM1 0h1v1.6h-1zM2 0h1v1.6h-1zM3 0h1v1.6h-1zM4 0h1v1.6h-1zM5 0h1v1.6h-1zM6 0h1v1.6h-1zM7 0h1v1.6h-1zM8 0h1v1.6h-1zM9 0h1v1.6h-1zM10 0h1v1.6h-1zM11 0h1v1.6h-1zM12 0h1v1.6h-1zM13 0h1v1.6h-1zM14 0h1v1.6h-1zM15 0h1v1.6h-1zM16 0h1v1.6h-1zM17 0h1v1.6h-1zM18 0h1v1.6h-1zM19 0h1v1.6h-1zM20 0h1v1.6h-1zM21 0h1v1.6h-1zM22 0h1v1.6h-1zM23 0h1v1.6h-1zM24 0h1v1.6h-1zM26 0h1v1.6h-1zM27 0h1v1.6h-1zM28 0h1v1.6h-1zM29 0h1v1.6h-1zM31 0h1v1.6h-1zM32 0h1v1.6h-1zM33 0h1v1.6h-1zM34 0h1v1.6h-1zM35 0h1v1.6h-1zM36 0h1v1.6h-1zM37 0h1v1.6h-1zM38 0h1v1.6h-1zM40 0h1v1.6h-1zM41 0h1v1.6h-1zM42 0h1v1.6h-1zM43 0h1v1.6h-1zM44 0h1v1.6h-1zM46 0h1v1.6h-1zM47 0h1v1.6h-1zM48 0h1v1.6h-1zM49 0h1v1.6h-1zM50 0h1v1.6h-1zM51 0h1v1.6h-1zM52 0h1v1.6h-1zM57 0h1v1.6h-1zM58 0h1v1.6h-1zM59 0h1v1.6h-1zM60 0h1v1.6h-1zM61 0h1v1.6h-1zM62 0h1v1.6h-1zM63 0h1v1.6h-1zM0 2h1v1.6h-1zM1 2h1v1.6h-1zM2 2h1v1.6h-1zM3 2h1v1.6h-1zM4 2h1v1.6h-1zM5 2h1v1.6h-1zM6 2h1v1.6h-1zM7 2h1v1.6h-1zM8 2h1v1.6h-1zM9 2h1v1.6h-1zM10 2h1v1.6h-1zM11 2h1v1.6h-1zM12 2h1v1.6h-1zM13 2h1v1.6h-1zM14 2h1v1.6h-1zM15 2h1v1.6h-1zM16 2h1v1.6h-1zM17 2h1v1.6h-1zM18 2h1v1.6h-1zM19 2h1v1.6h-1zM20 2h1v1.6h-1zM21 2h1v1.6h-1zM22 2h1v1.6h-1zM23 2h1v1.6h-1zM24 2h1v1.6h-1zM26 2h1v1.6h-1zM27 2h1v1.6h-1zM28 2h1v1.6h-1zM29 2h1v1.6h-1zM31 2h1v1.6h-1zM32 2h1v1.6h-1zM33 2h1v1.6h-1zM34 2h1v1.6h-1zM35 2h1v1.6h-1zM36 2h1v1.6h-1zM37 2h1v1.6h-1zM38 2h1v1.6h-1zM40 2h1v1.6h-1zM41 2h1v1.6h-1zM42 2h1v1.6h-1zM43 2h1v1.6h-1zM44 2h1v1.6h-1zM46 2h1v1.6h-1zM47 2h1v1.6h-1zM48 2h1v1.6h-1zM49 2h1v1.6h-1zM50 2h1v1.6h-1zM51 2h1v1.6h-1zM52 2h1v1.6h-1zM57 2h1v1.6h-1zM58 2h1v1.6h-1zM59 2h1v1.6h-1zM60 2h1v1.6h-1zM61 2h1v1.6h-1zM62 2h1v1.6h-1zM63 2h1v1.6h-1zM0 4h1v1.6h-1zM1 4h1v1.6h-1zM2 4h1v1.6h-1zM3 4h1v1.6h-1zM4 4h1v1.6h-1zM5 4h1v1.6h-1zM6 4h1v1.6h-1zM7 4h1v1.6h-1zM8 4h1v1.6h-1zM9 4h1v1.6h-1zM10 4h1v1.6h-1zM11 4h1v1.6h-1zM12 4h1v1.6h-1zM13 4h1v1.6h-1zM14 4h1v1.6h-1zM15 4h1v1.6h-1zM16 4h1v1.6h-1zM17 4h1v1.6h-1zM18 4h1v1.6h-1zM19 4h1v1.6h-1zM20 4h1v1.6h-1zM21 4h1v1.6h-1zM22 4h1v1.6h-1zM23 4h1v1.6h-1zM24 4h1v1.6h-1zM26 4h1v1.6h-1zM27 4h1v1.6h-1zM28 4h1v1.6h-1zM29 4h1v1.6h-1zM31 4h1v1.6h-1zM32 4h1v1.6h-1zM33 4h1v1.6h-1zM34 4h1v1.6h-1zM35 4h1v1.6h-1zM36 4h1v1.6h-1zM37 4h1v1.6h-1zM38 4h1v1.6h-1zM40 4h1v1.6h-1zM41 4h1v1.6h-1zM42 4h1v1.6h-1zM43 4h1v1.6h-1zM44 4h1v1.6h-1zM46 4h1v1.6h-1zM47 4h1v1.6h-1zM48 4h1v1.6h-1zM49 4h1v1.6h-1zM50 4h1v1.6h-1zM51 4h1v1.6h-1zM52 4h1v1.6h-1zM57 4h1v1.6h-1zM58 4h1v1.6h-1zM59 4h1v1.6h-1zM60 4h1v1.6h-1zM61 4h1v1.6h-1zM62 4h1v1.6h-1zM63 4h1v1.6h-1zM0 6h1v1.6h-1zM1 6h1v1.6h-1zM2 6h1v1.6h-1zM3 6h1v1.6h-1zM4 6h1v1.6h-1zM5 6h1v1.6h-1zM6 6h1v1.6h-1zM7 6h1v1.6h-1zM8 6h1v1.6h-1zM9 6h1v1.6h-1zM10 6h1v1.6h-1zM11 6h1v1.6h-1zM12 6h1v1.6h-1zM13 6h1v1.6h-1zM14 6h1v1.6h-1zM15 6h1v1.6h-1zM16 6h1v1.6h-1zM17 6h1v1.6h-1zM18 6h1v1.6h-1zM19 6h1v1.6h-1zM20 6h1v1.6h-1zM21 6h1v1.6h-1zM22 6h1v1.6h-1zM23 6h1v1.6h-1zM24 6h1v1.6h-1zM26 6h1v1.6h-1zM27 6h1v1.6h-1zM28 6h1v1.6h-1zM29 6h1v1.6h-1zM31 6h1v1.6h-1zM32 6h1v1.6h-1zM33 6h1v1.6h-1zM34 6h1v1.6h-1zM35 6h1v1.6h-1zM36 6h1v1.6h-1zM37 6h1v1.6h-1zM38 6h1v1.6h-1zM40 6h1v1.6h-1zM41 6h1v1.6h-1zM42 6h1v1.6h-1zM43 6h1v1.6h-1zM44 6h1v1.6h-1zM46 6h1v1.6h-1zM47 6h1v1.6h-1zM48 6h1v1.6h-1zM49 6h1v1.6h-1zM50 6h1v1.6h-1zM51 6h1v1.6h-1zM52 6h1v1.6h-1zM57 6h1v1.6h-1zM58 6h1v1.6h-1zM59 6h1v1.6h-1zM60 6h1v1.6h-1zM61 6h1v1.6h-1zM62 6h1v1.6h-1zM63 6h1v1.6h-1zM0 8h1v1.6h-1zM1 8h1v1.6h-1zM2 8h1v1.6h-1zM3 8h1v1.6h-1zM4 8h1v1.6h-1zM5 8h1v1.6h-1zM6 8h1v1.6h-1zM7 8h1v1.6h-1zM8 8h1v1.6h-1zM9 8h1v1.6h-1zM10 8h1v1.6h-1zM11 8h1v1.6h-1zM12 8h1v1.6h-1zM13 8h1v1.6h-1zM14 8h1v1.6h-1zM15 8h1v1.6h-1zM16 8h1v1.6h-1zM17 8h1v1.6h-1zM18 8h1v1.6h-1zM19 8h1v1.6h-1zM20 8h1v1.6h-1zM21 8h1v1.6h-1zM22 8h1v1.6h-1zM23 8h1v1.6h-1zM24 8h1v1.6h-1zM26 8h1v1.6h-1zM27 8h1v1.6h-1zM28 8h1v1.6h-1zM29 8h1v1.6h-1zM31 8h1v1.6h-1zM32 8h1v1.6h-1zM33 8h1v1.6h-1zM34 8h1v1.6h-1zM35 8h1v1.6h-1zM36 8h1v1.6h-1zM37 8h1v1.6h-1zM38 8h1v1.6h-1zM40 8h1v1.6h-1zM41 8h1v1.6h-1zM42 8h1v1.6h-1zM43 8h1v1.6h-1zM44 8h1v1.6h-1zM46 8h1v1.6h-1zM47 8h1v1.6h-1zM48 8h1v1.6h-1zM49 8h1v1.6h-1zM50 8h1v1.6h-1zM51 8h1v1.6h-1zM52 8h1v1.6h-1zM57 8h1v1.6h-1zM58 8h1v1.6h-1zM59 8h1v1.6h-1zM60 8h1v1.6h-1zM61 8h1v1.6h-1zM62 8h1v1.6h-1zM63 8h1v1.6h-1zM0 10h1v1.6h-1zM1 10h1v1.6h-1zM2 10h1v1.6h-1zM3 10h1v1.6h-1zM4 10h1v1.6h-1zM5 10h1v1.6h-1zM6 10h1v1.6h-1zM7 10h1v1.6h-1zM8 10h1v1.6h-1zM9 10h1v1.6h-1zM10 10h1v1.6h-1zM11 10h1v1.6h-1zM12 10h1v1.6h-1zM13 10h1v1.6h-1zM14 10h1v1.6h-1zM15 10h1v1.6h-1zM16 10h1v1.6h-1zM17 10h1v1.6h-1zM18 10h1v1.6h-1zM19 10h1v1.6h-1zM20 10h1v1.6h-1zM21 10h1v1.6h-1zM22 10h1v1.6h-1zM23 10h1v1.6h-1zM24 10h1v1.6h-1zM26 10h1v1.6h-1zM27 10h1v1.6h-1zM28 10h1v1.6h-1zM29 10h1v1.6h-1zM31 10h1v1.6h-1zM32 10h1v1.6h-1zM33 10h1v1.6h-1zM34 10h1v1.6h-1zM35 10h1v1.6h-1zM36 10h1v1.6h-1zM37 10h1v1.6h-1zM38 10h1v1.6h-1zM40 10h1v1.6h-1zM41 10h1v1.6h-1zM42 10h1v1.6h-1zM43 10h1v1.6h-1zM44 10h1v1.6h-1zM46 10h1v1.6h-1zM57 10h1v1.6h-1zM58 10h1v1.6h-1zM59 10h1v1.6h-1zM60 10h1v1.6h-1zM61 10h1v1.6h-1zM62 10h1v1.6h-1zM0 12h1v1.6h-1zM1 12h1v1.6h-1zM2 12h1v1.6h-1zM3 12h1v1.6h-1zM4 12h1v1.6h-1zM5 12h1v1.6h-1zM6 12h1v1.6h-1zM7 12h1v1.6h-1zM8 12h1v1.6h-1zM9 12h1v1.6h-1zM10 12h1v1.6h-1zM11 12h1v1.6h-1zM12 12h1v1.6h-1zM13 12h1v1.6h-1zM14 12h1v1.6h-1zM15 12h1v1.6h-1zM16 12h1v1.6h-1zM17 12h1v1.6h-1zM18 12h1v1.6h-1zM19 12h1v1.6h-1zM20 12h1v1.6h-1zM21 12h1v1.6h-1zM22 12h1v1.6h-1zM23 12h1v1.6h-1zM24 12h1v1.6h-1zM26 12h1v1.6h-1zM27 12h1v1.6h-1zM28 12h1v1.6h-1zM29 12h1v1.6h-1zM31 12h1v1.6h-1zM32 12h1v1.6h-1zM33 12h1v1.6h-1zM34 12h1v1.6h-1zM35 12h1v1.6h-1zM36 12h1v1.6h-1zM37 12h1v1.6h-1zM38 12h1v1.6h-1zM40 12h1v1.6h-1zM41 12h1v1.6h-1zM42 12h1v1.6h-1zM43 12h1v1.6h-1zM44 12h1v1.6h-1zM46 12h1v1.6h-1zM47 12h1v1.6h-1zM48 12h1v1.6h-1zM49 12h1v1.6h-1zM50 12h1v1.6h-1zM51 12h1v1.6h-1zM52 12h1v1.6h-1zM57 12h1v1.6h-1zM58 12h1v1.6h-1zM59 12h1v1.6h-1zM60 12h1v1.6h-1zM61 12h1v1.6h-1zM62 12h1v1.6h-1zM63 12h1v1.6h-1zM0 14h1v1.6h-1zM1 14h1v1.6h-1zM2 14h1v1.6h-1zM3 14h1v1.6h-1zM4 14h1v1.6h-1zM5 14h1v1.6h-1zM6 14h1v1.6h-1zM7 14h1v1.6h-1zM8 14h1v1.6h-1zM9 14h1v1.6h-1zM10 14h1v1.6h-1zM11 14h1v1.6h-1zM12 14h1v1.6h-1zM13 14h1v1.6h-1zM14 14h1v1.6h-1zM15 14h1v1.6h-1zM16 14h1v1.6h-1zM17 14h1v1.6h-1zM18 14h1v1.6h-1zM19 14h1v1.6h-1zM20 14h1v1.6h-1zM21 14h1v1.6h-1zM22 14h1v1.6h-1zM23 14h1v1.6h-1zM24 14h1v1.6h-1zM26 14h1v1.6h-1zM27 14h1v1.6h-1zM28 14h1v1.6h-1zM29 14h1v1.6h-1zM31 14h1v1.6h-1zM32 14h1v1.6h-1zM33 14h1v1.6h-1zM34 14h1v1.6h-1zM35 14h1v1.6h-1zM36 14h1v1.6h-1zM37 14h1v1.6h-1zM38 14h1v1.6h-1zM40 14h1v1.6h-1zM41 14h1v1.6h-1zM42 14h1v1.6h-1zM43 14h1v1.6h-1zM44 14h1v1.6h-1zM46 14h1v1.6h-1zM47 14h1v1.6h-1zM48 14h1v1.6h-1zM49 14h1v1.6h-1zM50 14h1v1.6h-1zM51 14h1v1.6h-1zM52 14h1v1.6h-1zM57 14h1v1.6h-1zM58 14h1v1.6h-1zM59 14h1v1.6h-1zM60 14h1v1.6h-1zM61 14h1v1.6h-1zM62 14h1v1.6h-1zM63 14h1v1.6h-1zM0 16h1v1.6h-1zM1 16h1v1.6h-1zM2 16h1v1.6h-1zM3 16h1v1.6h-1zM4 16h1v1.6h-1zM5 16h1v1.6h-1zM6 16h1v1.6h-1zM7 16h1v1.6h-1zM8 16h1v1.6h-1zM9 16h1v1.6h-1zM10 16h1v1.6h-1zM11 16h1v1.6h-1zM12 16h1v1.6h-1zM13 16h1v1.6h-1zM14 16h1v1.6h-1zM15 16h1v1.6h-1zM16 16h1v1.6h-1zM17 16h1v1.6h-1zM18 16h1v1.6h-1zM19 16h1v1.6h-1zM20 16h1v1.6h-1zM21 16h1v1.6h-1zM22 16h1v1.6h-1zM23 16h1v1.6h-1zM24 16h1v1.6h-1zM26 16h1v1.6h-1zM27 16h1v1.6h-1zM28 16h1v1.6h-1zM29 16h1v1.6h-1zM31 16h1v1.6h-1zM32 16h1v1.6h-1zM33 16h1v1.6h-1zM34 16h1v1.6h-1zM35 16h1v1.6h-1zM36 16h1v1.6h-1zM37 16h1v1.6h-1zM38 16h1v1.6h-1zM40 16h1v1.6h-1zM41 16h1v1.6h-1zM42 16h1v1.6h-1zM43 16h1v1.6h-1zM44 16h1v1.6h-1zM46 16h1v1.6h-1zM47 16h1v1.6h-1zM48 16h1v1.6h-1zM49 16h1v1.6h-1zM50 16h1v1.6h-1zM51 16h1v1.6h-1zM52 16h1v1.6h-1zM57 16h1v1.6h-1zM58 16h1v1.6h-1zM59 16h1v1.6h-1zM60 16h1v1.6h-1zM61 16h1v1.6h-1zM62 16h1v1.6h-1zM63 16h1v1.6h-1zM0 18h1v1.6h-1zM1 18h1v1.6h-1zM2 18h1v1.6h-1zM3 18h1v1.6h-1zM4 18h1v1.6h-1zM5 18h1v1.6h-1zM6 18h1v1.6h-1zM7 18h1v1.6h-1zM8 18h1v1.6h-1zM9 18h1v1.6h-1zM10 18h1v1.6h-1zM11 18h1v1.6h-1zM12 18h1v1.6h-1zM13 18h1v1.6h-1zM14 18h1v1.6h-1zM15 18h1v1.6h-1zM16 18h1v1.6h-1zM17 18h1v1.6h-1zM18 18h1v1.6h-1zM19 18h1v1.6h-1zM20 18h1v1.6h-1zM21 18h1v1.6h-1zM22 18h1v1.6h-1zM23 18h1v1.6h-1zM24 18h1v1.6h-1zM26 18h1v1.6h-1zM27 18h1v1.6h-1zM28 18h1v1.6h-1zM29 18h1v1.6h-1zM31 18h1v1.6h-1zM32 18h1v1.6h-1zM33 18h1v1.6h-1zM34 18h1v1.6h-1zM35 18h1v1.6h-1zM36 18h1v1.6h-1zM37 18h1v1.6h-1zM38 18h1v1.6h-1zM40 18h1v1.6h-1zM41 18h1v1.6h-1zM42 18h1v1.6h-1zM43 18h1v1.6h-1zM44 18h1v1.6h-1zM46 18h1v1.6h-1zM47 18h1v1.6h-1zM48 18h1v1.6h-1zM49 18h1v1.6h-1zM50 18h1v1.6h-1zM51 18h1v1.6h-1zM52 18h1v1.6h-1zM57 18h1v1.6h-1zM58 18h1v1.6h-1zM59 18h1v1.6h-1zM60 18h1v1.6h-1zM61 18h1v1.6h-1zM62 18h1v1.6h-1zM63 18h1v1.6h-1zM0 20h1v1.6h-1zM1 20h1v1.6h-1zM2 20h1v1.6h-1zM3 20h1v1.6h-1zM4 20h1v1.6h-1zM5 20h1v1.6h-1zM6 20h1v1.6h-1zM7 20h1v1.6h-1zM8 20h1v1.6h-1zM9 20h1v1.6h-1zM10 20h1v1.6h-1zM11 20h1v1.6h-1zM12 20h1v1.6h-1zM13 20h1v1.6h-1zM14 20h1v1.6h-1zM15 20h1v1.6h-1zM16 20h1v1.6h-1zM17 20h1v1.6h-1zM18 20h1v1.6h-1zM19 20h1v1.6h-1zM20 20h1v1.6h-1zM21 20h1v1.6h-1zM22 20h1v1.6h-1zM23 20h1v1.6h-1zM24 20h1v1.6h-1zM26 20h1v1.6h-1zM27 20h1v1.6h-1zM28 20h1v1.6h-1zM29 20h1v1.6h-1zM31 20h1v1.6h-1zM32 20h1v1.6h-1zM33 20h1v1.6h-1zM34 20h1v1.6h-1zM35 20h1v1.6h-1zM36 20h1v1.6h-1zM37 20h1v1.6h-1zM38 20h1v1.6h-1zM40 20h1v1.6h-1zM41 20h1v1.6h-1zM42 20h1v1.6h-1zM43 20h1v1.6h-1zM44 20h1v1.6h-1zM46 20h1v1.6h-1zM47 20h1v1.6h-1zM48 20h1v1.6h-1zM49 20h1v1.6h-1zM50 20h1v1.6h-1zM51 20h1v1.6h-1zM52 20h1v1.6h-1zM57 20h1v1.6h-1zM58 20h1v1.6h-1zM59 20h1v1.6h-1zM60 20h1v1.6h-1zM61 20h1v1.6h-1zM62 20h1v1.6h-1zM63 20h1v1.6h-1zM0 22h1v1.6h-1zM1 22h1v1.6h-1zM2 22h1v1.6h-1zM3 22h1v1.6h-1zM4 22h1v1.6h-1zM5 22h1v1.6h-1zM6 22h1v1.6h-1zM7 22h1v1.6h-1zM8 22h1v1.6h-1zM9 22h1v1.6h-1zM10 22h1v1.6h-1zM11 22h1v1.6h-1zM12 22h1v1.6h-1zM13 22h1v1.6h-1zM14 22h1v1.6h-1zM15 22h1v1.6h-1zM16 22h1v1.6h-1zM17 22h1v1.6h-1zM18 22h1v1.6h-1zM19 22h1v1.6h-1zM20 22h1v1.6h-1zM21 22h1v1.6h-1zM22 22h1v1.6h-1zM23 22h1v1.6h-1zM24 22h1v1.6h-1zM26 22h1v1.6h-1zM27 22h1v1.6h-1zM28 22h1v1.6h-1zM29 22h1v1.6h-1zM31 22h1v1.6h-1zM32 22h1v1.6h-1zM33 22h1v1.6h-1zM34 22h1v1.6h-1zM35 22h1v1.6h-1zM36 22h1v1.6h-1zM37 22h1v1.6h-1zM38 22h1v1.6h-1zM40 22h1v1.6h-1zM41 22h1v1.6h-1zM42 22h1v1.6h-1zM43 22h1v1.6h-1zM44 22h1v1.6h-1zM46 22h1v1.6h-1zM47 22h1v1.6h-1zM48 22h1v1.6h-1zM49 22h1v1.6h-1zM50 22h1v1.6h-1zM51 22h1v1.6h-1zM52 22h1v1.6h-1zM57 22h1v1.6h-1zM58 22h1v1.6h-1zM59 22h1v1.6h-1zM60 22h1v1.6h-1zM61 22h1v1.6h-1zM62 22h1v1.6h-1zM63 22h1v1.6h-1zM0 24h1v1.6h-1zM1 24h1v1.6h-1zM2 24h1v1.6h-1zM3 24h1v1.6h-1zM4 24h1v1.6h-1zM5 24h1v1.6h-1zM6 24h1v1.6h-1zM7 24h1v1.6h-1zM8 24h1v1.6h-1zM9 24h1v1.6h-1zM10 24h1v1.6h-1zM11 24h1v1.6h-1zM12 24h1v1.6h-1zM13 24h1v1.6h-1zM14 24h1v1.6h-1zM15 24h1v1.6h-1zM16 24h1v1.6h-1zM17 24h1v1.6h-1zM18 24h1v1.6h-1zM19 24h1v1.6h-1zM20 24h1v1.6h-1zM21 24h1v1.6h-1zM22 24h1v1.6h-1zM23 24h1v1.6h-1zM24 24h1v1.6h-1zM26 24h1v1.6h-1zM27 24h1v1.6h-1zM28 24h1v1.6h-1zM29 24h1v1.6h-1zM31 24h1v1.6h-1zM32 24h1v1.6h-1zM33 24h1v1.6h-1zM34 24h1v1.6h-1zM35 24h1v1.6h-1zM36 24h1v1.6h-1zM37 24h1v1.6h-1zM38 24h1v1.6h-1zM40 24h1v1.6h-1zM41 24h1v1.6h-1zM42 24h1v1.6h-1zM43 24h1v1.6h-1zM44 24h1v1.6h-1zM46 24h1v1.6h-1zM0 26h1v1.6h-1zM1 26h1v1.6h-1zM2 26h1v1.6h-1zM3 26h1v1.6h-1zM4 26h1v1.6h-1zM5 26h1v1.6h-1zM6 26h1v1.6h-1zM7 26h1v1.6h-1zM8 26h1v1.6h-1zM9 26h1v1.6h-1zM10 26h1v1.6h-1zM11 26h1v1.6h-1zM12 26h1v1.6h-1zM13 26h1v1.6h-1zM14 26h1v1.6h-1zM15 26h1v1.6h-1zM16 26h1v1.6h-1zM17 26h1v1.6h-1zM18 26h1v1.6h-1zM19 26h1v1.6h-1zM20 26h1v1.6h-1zM21 26h1v1.6h-1zM22 26h1v1.6h-1zM23 26h1v1.6h-1zM24 26h1v1.6h-1zM26 26h1v1.6h-1zM27 26h1v1.6h-1zM28 26h1v1.6h-1zM29 26h1v1.6h-1zM31 26h1v1.6h-1zM32 26h1v1.6h-1zM33 26h1v1.6h-1zM34 26h1v1.6h-1zM35 26h1v1.6h-1zM36 26h1v1.6h-1zM37 26h1v1.6h-1zM38 26h1v1.6h-1zM40 26h1v1.6h-1zM41 26h1v1.6h-1zM42 26h1v1.6h-1zM43 26h1v1.6h-1zM44 26h1v1.6h-1zM46 26h1v1.6h-1zM47 26h1v1.6h-1zM48 26h1v1.6h-1zM49 26h1v1.6h-1zM50 26h1v1.6h-1zM51 26h1v1.6h-1zM52 26h1v1.6h-1zM57 26h1v1.6h-1zM58 26h1v1.6h-1zM59 26h1v1.6h-1zM60 26h1v1.6h-1zM61 26h1v1.6h-1zM62 26h1v1.6h-1zM63 26h1v1.6h-1zM0 28h1v1.6h-1zM1 28h1v1.6h-1zM2 28h1v1.6h-1zM3 28h1v1.6h-1zM4 28h1v1.6h-1zM5 28h1v1.6h-1zM6 28h1v1.6h-1zM7 28h1v1.6h-1zM8 28h1v1.6h-1zM9 28h1v1.6h-1zM10 28h1v1.6h-1zM11 28h1v1.6h-1zM12 28h1v1.6h-1zM13 28h1v1.6h-1zM14 28h1v1.6h-1zM15 28h1v1.6h-1zM16 28h1v1.6h-1zM17 28h1v1.6h-1zM18 28h1v1.6h-1zM19 28h1v1.6h-1zM20 28h1v1.6h-1zM21 28h1v1.6h-1zM22 28h1v1.6h-1zM23 28h1v1.6h-1zM24 28h1v1.6h-1zM26 28h1v1.6h-1zM27 28h1v1.6h-1zM28 28h1v1.6h-1zM29 28h1v1.6h-1zM31 28h1v1.6h-1zM32 28h1v1.6h-1zM33 28h1v1.6h-1zM34 28h1v1.6h-1zM35 28h1v1.6h-1zM36 28h1v1.6h-1zM37 28h1v1.6h-1zM38 28h1v1.6h-1zM40 28h1v1.6h-1zM41 28h1v1.6h-1zM42 28h1v1.6h-1zM43 28h1v1.6h-1zM44 28h1v1.6h-1zM46 28h1v1.6h-1zM47 28h1v1.6h-1zM48 28h1v1.6h-1zM49 28h1v1.6h-1zM50 28h1v1.6h-1zM51 28h1v1.6h-1zM52 28h1v1.6h-1zM57 28h1v1.6h-1zM58 28h1v1.6h-1zM59 28h1v1.6h-1zM60 28h1v1.6h-1zM61 28h1v1.6h-1zM62 28h1v1.6h-1zM63 28h1v1.6h-1zM0 30h1v1.6h-1zM1 30h1v1.6h-1zM2 30h1v1.6h-1zM3 30h1v1.6h-1zM4 30h1v1.6h-1zM5 30h1v1.6h-1zM6 30h1v1.6h-1zM7 30h1v1.6h-1zM8 30h1v1.6h-1zM9 30h1v1.6h-1zM10 30h1v1.6h-1zM11 30h1v1.6h-1zM12 30h1v1.6h-1zM13 30h1v1.6h-1zM14 30h1v1.6h-1zM15 30h1v1.6h-1zM16 30h1v1.6h-1zM17 30h1v1.6h-1zM18 30h1v1.6h-1zM19 30h1v1.6h-1zM20 30h1v1.6h-1zM21 30h1v1.6h-1zM22 30h1v1.6h-1zM23 30h1v1.6h-1zM24 30h1v1.6h-1zM26 30h1v1.6h-1zM27 30h1v1.6h-1zM28 30h1v1.6h-1zM29 30h1v1.6h-1zM31 30h1v1.6h-1zM32 30h1v1.6h-1zM33 30h1v1.6h-1zM34 30h1v1.6h-1zM35 30h1v1.6h-1zM36 30h1v1.6h-1zM37 30h1v1.6h-1zM38 30h1v1.6h-1zM40 30h1v1.6h-1zM41 30h1v1.6h-1zM42 30h1v1.6h-1zM43 30h1v1.6h-1zM44 30h1v1.6h-1zM46 30h1v1.6h-1zM47 30h1v1.6h-1zM48 30h1v1.6h-1zM49 30h1v1.6h-1zM50 30h1v1.6h-1zM51 30h1v1.6h-1zM52 30h1v1.6h-1zM57 30h1v1.6h-1zM58 30h1v1.6h-1zM59 30h1v1.6h-1zM60 30h1v1.6h-1zM61 30h1v1.6h-1zM62 30h1v1.6h-1zM63 30h1v1.6h-1zM0 32h1v1.6h-1zM1 32h1v1.6h-1zM2 32h1v1.6h-1zM3 32h1v1.6h-1zM4 32h1v1.6h-1zM5 32h1v1.6h-1zM6 32h1v1.6h-1zM7 32h1v1.6h-1zM8 32h1v1.6h-1zM9 32h1v1.6h-1zM10 32h1v1.6h-1zM11 32h1v1.6h-1zM12 32h1v1.6h-1zM13 32h1v1.6h-1zM14 32h1v1.6h-1zM15 32h1v1.6h-1zM16 32h1v1.6h-1zM17 32h1v1.6h-1zM18 32h1v1.6h-1zM19 32h1v1.6h-1zM20 32h1v1.6h-1zM21 32h1v1.6h-1zM22 32h1v1.6h-1zM23 32h1v1.6h-1zM24 32h1v1.6h-1zM26 32h1v1.6h-1zM27 32h1v1.6h-1zM28 32h1v1.6h-1zM29 32h1v1.6h-1zM31 32h1v1.6h-1zM32 32h1v1.6h-1zM33 32h1v1.6h-1zM34 32h1v1.6h-1zM35 32h1v1.6h-1zM36 32h1v1.6h-1zM37 32h1v1.6h-1zM38 32h1v1.6h-1zM40 32h1v1.6h-1zM41 32h1v1.6h-1zM42 32h1v1.6h-1zM43 32h1v1.6h-1zM44 32h1v1.6h-1zM46 32h1v1.6h-1zM47 32h1v1.6h-1zM48 32h1v1.6h-1zM49 32h1v1.6h-1zM50 32h1v1.6h-1zM51 32h1v1.6h-1zM52 32h1v1.6h-1zM57 32h1v1.6h-1zM58 32h1v1.6h-1zM59 32h1v1.6h-1zM60 32h1v1.6h-1zM61 32h1v1.6h-1zM62 32h1v1.6h-1zM63 32h1v1.6h-1zM0 34h1v1.6h-1zM1 34h1v1.6h-1zM2 34h1v1.6h-1zM3 34h1v1.6h-1zM4 34h1v1.6h-1zM5 34h1v1.6h-1zM6 34h1v1.6h-1zM7 34h1v1.6h-1zM8 34h1v1.6h-1zM9 34h1v1.6h-1zM10 34h1v1.6h-1zM11 34h1v1.6h-1zM12 34h1v1.6h-1zM13 34h1v1.6h-1zM14 34h1v1.6h-1zM15 34h1v1.6h-1zM16 34h1v1.6h-1zM17 34h1v1.6h-1zM18 34h1v1.6h-1zM19 34h1v1.6h-1zM20 34h1v1.6h-1zM21 34h1v1.6h-1zM22 34h1v1.6h-1zM23 34h1v1.6h-1zM24 34h1v1.6h-1zM26 34h1v1.6h-1zM27 34h1v1.6h-1zM28 34h1v1.6h-1zM29 34h1v1.6h-1zM31 34h1v1.6h-1zM32 34h1v1.6h-1zM33 34h1v1.6h-1zM34 34h1v1.6h-1zM35 34h1v1.6h-1zM36 34h1v1.6h-1zM37 34h1v1.6h-1zM38 34h1v1.6h-1zM40 34h1v1.6h-1zM41 34h1v1.6h-1zM42 34h1v1.6h-1zM43 34h1v1.6h-1zM44 34h1v1.6h-1zM46 34h1v1.6h-1zM47 34h1v1.6h-1zM48 34h1v1.6h-1zM49 34h1v1.6h-1zM50 34h1v1.6h-1zM51 34h1v1.6h-1zM52 34h1v1.6h-1zM57 34h1v1.6h-1zM58 34h1v1.6h-1zM59 34h1v1.6h-1zM60 34h1v1.6h-1zM61 34h1v1.6h-1zM62 34h1v1.6h-1zM63 34h1v1.6h-1zM0 36h1v1.6h-1zM1 36h1v1.6h-1zM2 36h1v1.6h-1zM3 36h1v1.6h-1zM4 36h1v1.6h-1zM5 36h1v1.6h-1zM6 36h1v1.6h-1zM7 36h1v1.6h-1zM8 36h1v1.6h-1zM9 36h1v1.6h-1zM10 36h1v1.6h-1zM11 36h1v1.6h-1zM12 36h1v1.6h-1zM13 36h1v1.6h-1zM14 36h1v1.6h-1zM15 36h1v1.6h-1zM16 36h1v1.6h-1zM17 36h1v1.6h-1zM18 36h1v1.6h-1zM19 36h1v1.6h-1zM20 36h1v1.6h-1zM21 36h1v1.6h-1zM22 36h1v1.6h-1zM23 36h1v1.6h-1zM24 36h1v1.6h-1zM26 36h1v1.6h-1zM27 36h1v1.6h-1zM28 36h1v1.6h-1zM29 36h1v1.6h-1zM31 36h1v1.6h-1zM32 36h1v1.6h-1zM33 36h1v1.6h-1zM34 36h1v1.6h-1zM35 36h1v1.6h-1zM36 36h1v1.6h-1zM37 36h1v1.6h-1zM38 36h1v1.6h-1zM40 36h1v1.6h-1zM41 36h1v1.6h-1zM42 36h1v1.6h-1zM43 36h1v1.6h-1zM44 36h1v1.6h-1zM46 36h1v1.6h-1zM0 38h1v1.6h-1zM1 38h1v1.6h-1zM2 38h1v1.6h-1zM3 38h1v1.6h-1zM4 38h1v1.6h-1zM5 38h1v1.6h-1zM6 38h1v1.6h-1zM7 38h1v1.6h-1zM8 38h1v1.6h-1zM9 38h1v1.6h-1zM10 38h1v1.6h-1zM11 38h1v1.6h-1zM12 38h1v1.6h-1zM13 38h1v1.6h-1zM14 38h1v1.6h-1zM15 38h1v1.6h-1zM16 38h1v1.6h-1zM17 38h1v1.6h-1zM18 38h1v1.6h-1zM19 38h1v1.6h-1zM20 38h1v1.6h-1zM21 38h1v1.6h-1zM22 38h1v1.6h-1zM23 38h1v1.6h-1zM24 38h1v1.6h-1zM26 38h1v1.6h-1zM27 38h1v1.6h-1zM28 38h1v1.6h-1zM29 38h1v1.6h-1zM31 38h1v1.6h-1zM32 38h1v1.6h-1zM33 38h1v1.6h-1zM34 38h1v1.6h-1zM35 38h1v1.6h-1zM36 38h1v1.6h-1zM37 38h1v1.6h-1zM38 38h1v1.6h-1zM40 38h1v1.6h-1zM41 38h1v1.6h-1zM42 38h1v1.6h-1zM43 38h1v1.6h-1zM44 38h1v1.6h-1zM46 38h1v1.6h-1zM57 38h1v1.6h-1zM58 38h1v1.6h-1zM59 38h1v1.6h-1zM60 38h1v1.6h-1zM61 38h1v1.6h-1zM62 38h1v1.6h-1zM63 38h1v1.6h-1z"/></g></svg>
<div class="a" style="left:1833px;top:168px;width:63px;height:1px;background:#264f78"></div>
<div class="red" style="left:412px;top:222px;width:728px;height:136px"></div>
<div class="red" style="left:1283px;top:223px;width:550px;height:25px"></div>
<div class="a" style="left:391px;top:704px;width:1519px;height:302px;background:#1e1e1e;border-top:1px solid #424242"></div>
<div class="a" style="left:411px;top:715px;font-size:11px;color:#969696;line-height:14px;white-space:pre"><i class="cj" style="width:10.5px">输</i><i class="cj" style="width:10.5px">出</i></div>
<div class="a" style="left:457px;top:715px;font-size:11px;color:#969696;line-height:14px;white-space:pre"><i class="cj" style="width:10.6px">调</i><i class="cj" style="width:10.6px">试</i><i class="cj" style="width:10.6px">控</i><i class="cj" style="width:10.6px">制</i><i class="cj" style="width:10.6px">台</i></div>
<div class="a" style="left:534px;top:715px;font-size:11px;color:#e7e7e7;line-height:14px;white-space:pre"><i class="cj" style="width:11.2px">终</i><i class="cj" style="width:11.2px">端</i></div>
<div class="a" style="left:533px;top:733px;width:26px;height:1px;background:#e7e7e7"></div>
<svg style="left:1823px;top:715px" width="30" height="14"><g fill="none" stroke="#c5c5c5" stroke-width="1.2"><path d="M7 0.5v13M0.5 7h13"/><path d="M19.5 6l3 3 3-3"/></g></svg>
<svg style="left:1864px;top:717px" width="12" height="8"><path d="M1 6.5l5-5 5 5" fill="none" stroke="#c5c5c5" stroke-width="1.2"/></svg>
<svg style="left:1886px;top:717px" width="10" height="10"><path d="M0.5 0.5L9.5 9.5M9.5 0.5L0.5 9.5" stroke="#c5c5c5" stroke-width="1.2"/></svg>
<div class="a" style="left:1710px;top:739px;width:1px;height:267px;background:#3c3c3c"></div>
<div class="a" style="left:1711px;top:739px;width:199px;height:22px;background:#094771;border:1px solid #007fd4"></div>
<svg style="left:1722px;top:744px" width="14" height="14"><g fill="none" stroke="#cccccc" stroke-width="1.1"><rect x="0.6" y="0.6" width="12.8" height="12.8"/><path d="M4.5 3.8l3 3-3 3"/></g></svg>
<div class="a" style="left:1740px;top:741px;font-size:13px;letter-spacing:0.45px;color:#ffffff;line-height:18px;white-space:pre">make</div>
<svg style="left:1864px;top:743px" width="14" height="14"><g fill="none" stroke="#e0e0e0" stroke-width="1.1"><rect x="0.6" y="0.6" width="12.8" height="12.8"/><path d="M7 0.6v12.8"/></g></svg>
<svg style="left:1884px;top:742px" width="12" height="15"><g fill="none" stroke="#e0e0e0" stroke-width="1.1"><path d="M0.5 3h11M4 3V1h4v2M1.8 3l.8 11h6.8l.8-11M4.5 5.5v7M7.5 5.5v7"/></g></svg>
<svg style="left:1722px;top:766px" width="14" height="14"><g fill="none" stroke="#cccccc" stroke-width="1.1"><rect x="0.6" y="0.6" width="12.8" height="12.8"/><path d="M4.5 3.8l3 3-3 3"/></g></svg>
<div class="a" style="left:1740px;top:763px;font-size:13px;letter-spacing:0.45px;color:#cccccc;line-height:18px;white-space:pre">bash</div>
<div class="a" style="left:409px;top:750px;width:29px;height:14px;background:#1f5a3f"></div><div class="a" style="left:438px;top:750px;width:40px;height:14px;background:#22704c"></div><div class="a" style="left:478px;top:750px;width:11px;height:14px;background:#1e3a2c"></div><div class="a" style="left:489px;top:750px;width:20px;height:14px;background:#20603f"></div><div class="a" style="left:509px;top:750px;width:19px;height:14px;background:#1e2530"></div><div class="a" style="left:528px;top:750px;width:20px;height:14px;background:#24406a"></div><div class="a" style="left:548px;top:750px;width:11px;height:14px;background:#2f5a92"></div><div class="a" style="left:559px;top:750px;width:20px;height:14px;background:#264470"></div><div class="a" style="left:579px;top:750px;width:10px;height:14px;background:#3567a8"></div><div class="a" style="left:589px;top:750px;width:9px;height:14px;background:#2a4c78"></div><div class="a" style="left:598px;top:750px;width:10px;height:14px;background:#2d5a90"></div><div class="a" style="left:608px;top:750px;width:10px;height:14px;background:#1e2632"></div><div class="a" style="left:618px;top:750px;width:20px;height:14px;background:#243d62"></div><div class="a" style="left:638px;top:750px;width:10px;height:14px;background:#2b5088"></div><div class="a" style="left:648px;top:750px;width:9px;height:14px;background:#1f2a3a"></div><div class="a" style="left:657px;top:750px;width:11px;height:14px;background:#263f63"></div><div class="a" style="left:668px;top:750px;width:10px;height:14px;background:#3b4f66"></div>
<div class="a" style="left:409px;top:798px;width:29px;height:14px;background:#1f5a3f"></div><div class="a" style="left:438px;top:798px;width:40px;height:14px;background:#22704c"></div><div class="a" style="left:478px;top:798px;width:11px;height:14px;background:#1e3a2c"></div><div class="a" style="left:489px;top:798px;width:20px;height:14px;background:#20603f"></div><div class="a" style="left:509px;top:798px;width:19px;height:14px;background:#1e2530"></div><div class="a" style="left:528px;top:798px;width:20px;height:14px;background:#24406a"></div><div class="a" style="left:548px;top:798px;width:11px;height:14px;background:#2f5a92"></div><div class="a" style="left:559px;top:798px;width:20px;height:14px;background:#264470"></div><div class="a" style="left:579px;top:798px;width:10px;height:14px;background:#3567a8"></div><div class="a" style="left:589px;top:798px;width:9px;height:14px;background:#2a4c78"></div><div class="a" style="left:598px;top:798px;width:10px;height:14px;background:#2d5a90"></div><div class="a" style="left:608px;top:798px;width:10px;height:14px;background:#1e2632"></div><div class="a" style="left:618px;top:798px;width:20px;height:14px;background:#243d62"></div><div class="a" style="left:638px;top:798px;width:10px;height:14px;background:#2b5088"></div><div class="a" style="left:648px;top:798px;width:9px;height:14px;background:#1f2a3a"></div><div class="a" style="left:657px;top:798px;width:11px;height:14px;background:#263f63"></div><div class="a" style="left:668px;top:798px;width:10px;height:14px;background:#3b4f66"></div>
<div class="term" style="left:688px;top:750px">make</div>
<div class="term" style="left:411px;top:766px">CC -[M] <i class="cj" style="width:15.84px">正</i><i class="cj" style="width:15.84px">在</i><i class="cj" style="width:15.84px">构</i><i class="cj" style="width:15.84px">建</i>... main.c</div>
<div class="term" style="left:411px;top:782px">CC -[M] <i class="cj" style="width:15.84px">正</i><i class="cj" style="width:15.84px">在</i><i class="cj" style="width:15.84px">构</i><i class="cj" style="width:15.84px">建</i>... main.elf</div>
<div class="term" style="left:688px;top:798px">make run</div>
<div class="term" style="left:411px;top:814px"><i class="cj" style="width:15.84px">程</i><i class="cj" style="width:15.84px">序</i><i class="cj" style="width:15.84px">运</i><i class="cj" style="width:15.84px">行</i><i class="cj" style="width:15.84px">时</i><i class="cj" style="width:15.84px">当</i><i class="cj" style="width:15.84px">前</i><i class="cj" style="width:15.84px">堆</i><i class="cj" style="width:15.84px">指</i><i class="cj" style="width:15.84px">针</i>:0x684000 <i class="cj" style="width:15.84px">新</i><i class="cj" style="width:15.84px">分</i><i class="cj" style="width:15.84px">配</i><i class="cj" style="width:15.84px">的</i><i class="cj" style="width:15.84px">堆</i><i class="cj" style="width:15.84px">内</i><i class="cj" style="width:15.84px">存</i>:0x684000 :0x684001</div>
<div class="term" style="left:411px;top:830px">Text<i class="cj" style="width:15.84px">段</i>,<i class="cj" style="width:15.84px">程</i><i class="cj" style="width:15.84px">序</i><i class="cj" style="width:15.84px">运</i><i class="cj" style="width:15.84px">行</i><i class="cj" style="width:15.84px">时</i><i class="cj" style="width:15.84px">指</i><i class="cj" style="width:15.84px">令</i><i class="cj" style="width:15.84px">数</i><i class="cj" style="width:15.84px">据</i><i class="cj" style="width:15.84px">开</i><i class="cj" style="width:15.84px">始</i>:0x400000,<i class="cj" style="width:15.84px">结</i><i class="cj" style="width:15.84px">束</i>:0x40130d</div>
<div class="term" style="left:411px;top:846px">Data<i class="cj" style="width:15.84px">段</i>,<i class="cj" style="width:15.84px">程</i><i class="cj" style="width:15.84px">序</i><i class="cj" style="width:15.84px">运</i><i class="cj" style="width:15.84px">行</i><i class="cj" style="width:15.84px">时</i><i class="cj" style="width:15.84px">初</i><i class="cj" style="width:15.84px">始</i><i class="cj" style="width:15.84px">化</i><i class="cj" style="width:15.84px">全</i><i class="cj" style="width:15.84px">局</i><i class="cj" style="width:15.84px">变</i><i class="cj" style="width:15.84px">量</i><i class="cj" style="width:15.84px">和</i><i class="cj" style="width:15.84px">静</i><i class="cj" style="width:15.84px">态</i><i class="cj" style="width:15.84px">变</i><i class="cj" style="width:15.84px">量</i><i class="cj" style="width:15.84px">的</i><i class="cj" style="width:15.84px">数</i><i class="cj" style="width:15.84px">据</i><i class="cj" style="width:15.84px">开</i><i class="cj" style="width:15.84px">始</i>:0x40130d,<i class="cj" style="width:15.84px">结</i><i class="cj" style="width:15.84px">束</i>:0x404050</div>
<div class="term" style="left:411px;top:862px">Bss<i class="cj" style="width:15.84px">段</i>,<i class="cj" style="width:15.84px">程</i><i class="cj" style="width:15.84px">序</i><i class="cj" style="width:15.84px">运</i><i class="cj" style="width:15.84px">行</i><i class="cj" style="width:15.84px">时</i><i class="cj" style="width:15.84px">未</i><i class="cj" style="width:15.84px">初</i><i class="cj" style="width:15.84px">始</i><i class="cj" style="width:15.84px">化</i><i class="cj" style="width:15.84px">全</i><i class="cj" style="width:15.84px">局</i><i class="cj" style="width:15.84px">变</i><i class="cj" style="width:15.84px">量</i><i class="cj" style="width:15.84px">和</i><i class="cj" style="width:15.84px">静</i><i class="cj" style="width:15.84px">态</i><i class="cj" style="width:15.84px">变</i><i class="cj" style="width:15.84px">量</i><i class="cj" style="width:15.84px">的</i><i class="cj" style="width:15.84px">数</i><i class="cj" style="width:15.84px">据</i><i class="cj" style="width:15.84px">开</i><i class="cj" style="width:15.84px">始</i>:0x404050,<i class="cj" style="width:15.84px">结</i><i class="cj" style="width:15.84px">束</i>:0x404060</div>
<div class="term" style="left:411px;top:878px">(pid:46255)<i class="cj" style="width:15.84px">应</i><i class="cj" style="width:15.84px">用</i><i class="cj" style="width:15.84px">程</i><i class="cj" style="width:15.84px">序</i><i class="cj" style="width:15.84px">正</i><i class="cj" style="width:15.84px">在</i><i class="cj" style="width:15.84px">运</i><i class="cj" style="width:15.84px">行</i>,<i class="cj" style="width:15.84px">请</i><i class="cj" style="width:15.84px">输</i><i class="cj" style="width:15.84px">入</i>:c,<i class="cj" style="width:15.84px">退</i><i class="cj" style="width:15.84px">出</i></div>
<div class="term" style="left:411px;top:894px"><i class="cj" style="width:15.84px">请</i><i class="cj" style="width:15.84px">输</i><i class="cj" style="width:15.84px">入</i>:</div>
<div class="a" style="left:467px;top:895px;width:8px;height:14px;border:1px solid #cccccc"></div>
<div class="red" style="left:408px;top:813px;width:721px;height:23px"></div>
<div class="a" style="left:10px;top:1006px;width:1900px;height:22px;background:#007acc"></div>
<div class="a" style="left:10px;top:1006px;width:33px;height:22px;background:#16825d"></div>
<svg style="left:20px;top:1010px" width="14" height="14"><g fill="none" stroke="#ffffff" stroke-width="1.2"><path d="M1.3 5.5l4 3.5-4 3.8M10.5 0.8L6.8 4.4l3.7 3.6"/></g></svg>
<svg style="left:51px;top:1011px" width="13" height="13"><g fill="none" stroke="#ffffff" stroke-width="1.1"><circle cx="6.3" cy="6.3" r="5.7"/><path d="M4 4l4.6 4.6M8.6 4L4 8.6"/></g></svg>
<div class="a" style="left:67px;top:1009.5px;font-size:12.5px;color:#fff;line-height:16px;white-space:pre">0</div>
<svg style="left:77px;top:1011px" width="13" height="13"><g fill="none" stroke="#ffffff" stroke-width="1.1"><path d="M6 0.8L11.5 11.8H0.6z M6 4.5v4"/></g></svg>
<div class="a" style="left:93px;top:1009.5px;font-size:12.5px;color:#fff;line-height:16px;white-space:pre">0</div>
<div class="a" style="left:1576px;top:1009.5px;font-size:12.5px;color:#fff;line-height:16px;white-space:pre"><i class="cj" style="width:12px">行</i> 46<i class="cj" style="width:12px">，</i><i class="cj" style="width:12px">列</i> 2</div>
<div class="a" style="left:1653px;top:1009.5px;font-size:12.5px;color:#fff;line-height:16px;white-space:pre"><i class="cj" style="width:12px">空</i><i class="cj" style="width:12px">格</i>: 4</div>
<div class="a" style="left:1705px;top:1009.5px;font-size:12.5px;color:#fff;line-height:16px;white-space:pre">UTF-8</div>
<div class="a" style="left:1753px;top:1009.5px;font-size:12.5px;color:#fff;line-height:16px;white-space:pre">LF</div>
<div class="a" style="left:1782px;top:1009.5px;font-size:12.5px;color:#fff;line-height:16px;white-space:pre">C</div>
<div class="a" style="left:1806px;top:1009.5px;font-size:12.5px;color:#fff;line-height:16px;white-space:pre">Linux</div>
<svg style="left:1852px;top:1010px" width="15" height="14"><g fill="none" stroke="#ffffff" stroke-width="1.1"><circle cx="5" cy="4.5" r="3.2"/><path d="M0.8 13c.5-3 2-4.8 4.2-4.8M8 7.5l5.5-5.5v4M13.5 2H9.5"/></g></svg>
<svg style="left:1883px;top:1010px" width="15" height="15"><g fill="none" stroke="#ffffff" stroke-width="1.1"><path d="M1.5 10.5h10M2.5 10.5V6a4 4 0 0 1 6-3.4M10.5 10.5V7M4.5 12.5h4"/></g><circle cx="9.3" cy="3.3" r="2.5" fill="#ffffff"/></svg>
</body></html>
